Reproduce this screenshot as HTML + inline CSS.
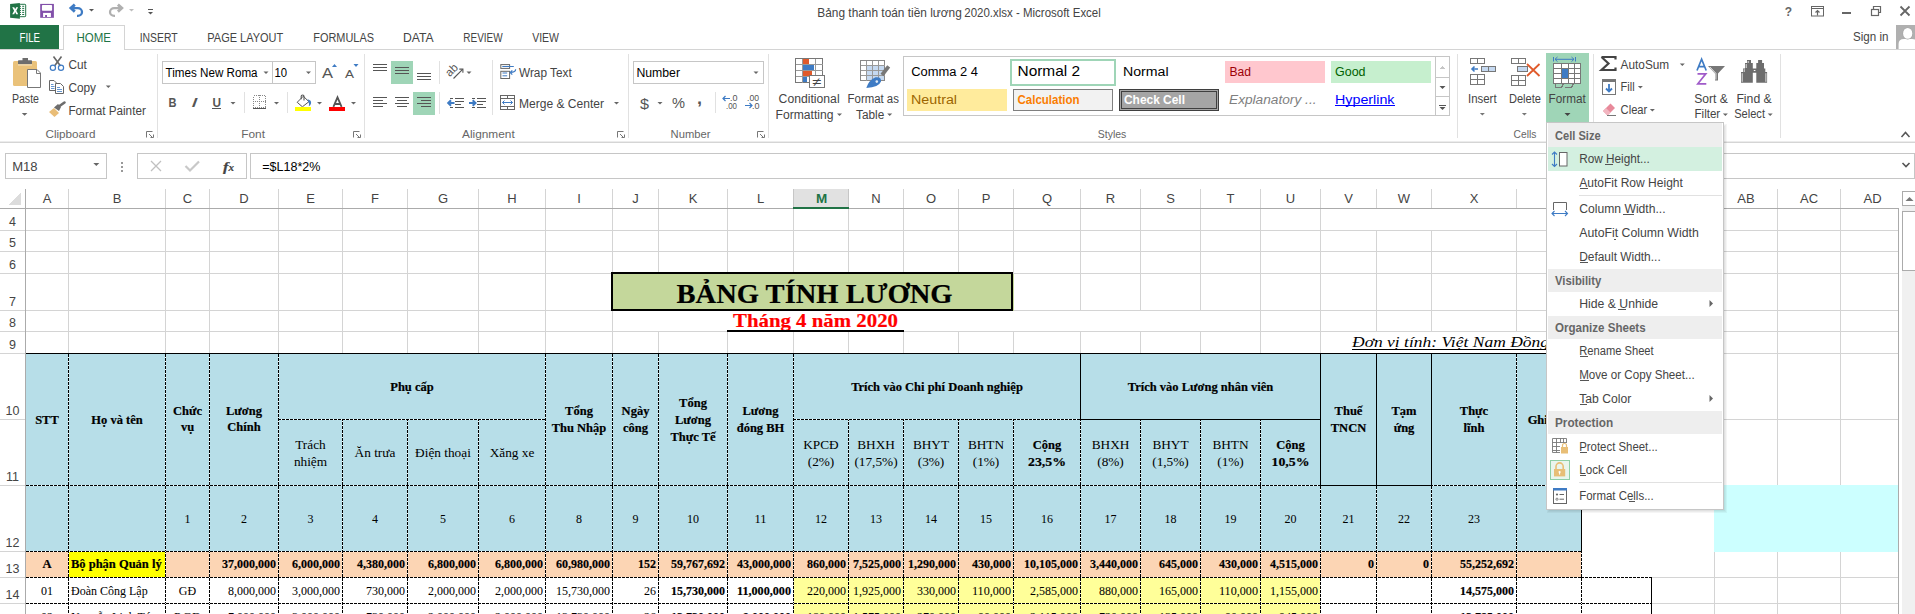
<!DOCTYPE html>
<html><head><meta charset="utf-8"><style>
html,body{margin:0;padding:0;background:#fff;}
body{width:1915px;height:614px;overflow:hidden;position:relative;}
svg{position:absolute;left:0;top:0;display:block;}
text{white-space:pre;}
</style></head><body>
<svg width="1915" height="614" viewBox="0 0 1915 614" shape-rendering="crispEdges">
<rect x="0" y="0" width="1915" height="153" fill="#ffffff" />
<g shape-rendering="geometricPrecision"><rect x="19.3" y="4.3" width="6.4" height="12.4" rx="0.8" fill="#fff" stroke="#217346" stroke-width="1"/><path d="M20 6.3 H21 M22.2 6.3 H24.2 M20 8.4 H21 M22.2 8.4 H24.2 M20 10.4 H21 M22.2 10.4 H24.2 M20 12.4 H21 M22.2 12.4 H24.2 M20 14.5 H21 M22.2 14.5 H24.2" stroke="#217346" stroke-width="1"/><path d="M10.1 4 L19.9 2.9 L19.9 18.8 L10.1 17.8 Z" fill="#217346"/><path d="M12.2 7.3 L14.2 7.3 L15.2 9.3 L16.2 7.3 L18.1 7.3 L16.3 10.7 L18.2 14.2 L16.2 14.2 L15.2 12.1 L14.2 14.2 L12.2 14.2 L14.1 10.7 Z" fill="#fff"/></g>
<g shape-rendering="geometricPrecision"><rect x="40.2" y="3.9" width="13.7" height="13.9" fill="#8250aa"/><rect x="41.9" y="4.9" width="10.2" height="5.9" rx="0.8" fill="#fff"/><rect x="43.1" y="12.9" width="7.8" height="4.1" fill="#fff"/><rect x="45.1" y="15" width="1.9" height="2" fill="#8250aa"/></g>
<g shape-rendering="geometricPrecision" fill="none"><path d="M74.8 4.6 L70.9 8.1 L74.8 11.6" stroke="#3e7bc4" stroke-width="2.8" stroke-linejoin="miter"/><path d="M71.5 8.1 H77.8 A4.2 3.9 0 0 1 77.8 15.9 H77" stroke="#3e7bc4" stroke-width="2.3"/></g>
<polygon points="89.0,9 94.0,9 91.5,11.5" fill="#555" shape-rendering="geometricPrecision"/>
<g shape-rendering="geometricPrecision" fill="none"><path d="M117.9 4.6 L121.8 8.1 L117.9 11.6" stroke="#b0b0b0" stroke-width="2.8" stroke-linejoin="miter"/><path d="M121.2 8.1 H114.2 A4.2 3.9 0 0 0 114.2 15.9 H115" stroke="#b0b0b0" stroke-width="2.3"/></g>
<polygon points="129.0,9 134.0,9 131.5,11.5" fill="#bdbdbd" shape-rendering="geometricPrecision"/>
<rect x="148" y="9" width="5" height="1" fill="#555" />
<polygon points="148.0,12 153.0,12 150.5,14.5" fill="#555" shape-rendering="geometricPrecision"/>
<text x="817.3" y="17" font-family="Liberation Sans" font-size="12" fill="#444444" font-weight="normal" font-style="normal" text-anchor="start" textLength="144.5" lengthAdjust="spacingAndGlyphs" >Bảng thanh toán tiền lương</text>
<text x="964.3" y="17" font-family="Liberation Sans" font-size="12" fill="#444444" font-weight="normal" font-style="normal" text-anchor="start" textLength="136.5" lengthAdjust="spacingAndGlyphs" >2020.xlsx - Microsoft Excel</text>
<g shape-rendering="geometricPrecision" fill="none" stroke="#666"><rect x="1811.5" y="6.5" width="12" height="9.5" stroke-width="1"/><path d="M1811.5 8.5 H1823.5" stroke-width="1"/><path d="M1817.5 15.5 V11 M1815.5 12.5 L1817.5 10.5 L1819.5 12.5" stroke-width="1.2"/><rect x="1842" y="12" width="9" height="2" fill="#666" stroke="none"/><rect x="1871.5" y="9.5" width="7" height="6" stroke-width="1.2"/><path d="M1873.5 9.5 V6.5 H1880.5 V12.5 H1878.5" stroke-width="1.2"/><path d="M1900.5 6.5 L1909.5 15.5 M1909.5 6.5 L1900.5 15.5" stroke-width="1.8"/></g>
<text x="1788.5" y="16" font-family="Liberation Sans" font-size="12" fill="#666" font-weight="bold" font-style="normal" text-anchor="middle" >?</text>
<rect x="0" y="25" width="59" height="25" fill="#217346" />
<text x="19.5" y="42" font-family="Liberation Sans" font-size="12" fill="#ffffff" font-weight="normal" font-style="normal" text-anchor="start" textLength="20.5" lengthAdjust="spacingAndGlyphs" >FILE</text>
<path d="M63.5 50 V25.5 H124.5 V50" fill="#fff" stroke="#d4d4d4" stroke-width="1"/>
<line x1="0" y1="49.5" x2="63" y2="49.5" stroke="#d4d4d4" stroke-width="1"/>
<line x1="125" y1="49.5" x2="1915" y2="49.5" stroke="#d4d4d4" stroke-width="1"/>
<text x="76.5" y="42" font-family="Liberation Sans" font-size="12" fill="#217346" font-weight="normal" font-style="normal" text-anchor="start" textLength="34.5" lengthAdjust="spacingAndGlyphs" >HOME</text>
<text x="139.7" y="42" font-family="Liberation Sans" font-size="12" fill="#444444" font-weight="normal" font-style="normal" text-anchor="start" textLength="38.0" lengthAdjust="spacingAndGlyphs" >INSERT</text>
<text x="207.3" y="42" font-family="Liberation Sans" font-size="12" fill="#444444" font-weight="normal" font-style="normal" text-anchor="start" textLength="75.9" lengthAdjust="spacingAndGlyphs" >PAGE LAYOUT</text>
<text x="313.3" y="42" font-family="Liberation Sans" font-size="12" fill="#444444" font-weight="normal" font-style="normal" text-anchor="start" textLength="60.7" lengthAdjust="spacingAndGlyphs" >FORMULAS</text>
<text x="403" y="42" font-family="Liberation Sans" font-size="12" fill="#444444" font-weight="normal" font-style="normal" text-anchor="start" textLength="30.6" lengthAdjust="spacingAndGlyphs" >DATA</text>
<text x="463.3" y="42" font-family="Liberation Sans" font-size="12" fill="#444444" font-weight="normal" font-style="normal" text-anchor="start" textLength="39.4" lengthAdjust="spacingAndGlyphs" >REVIEW</text>
<text x="532.2" y="42" font-family="Liberation Sans" font-size="12" fill="#444444" font-weight="normal" font-style="normal" text-anchor="start" textLength="26.8" lengthAdjust="spacingAndGlyphs" >VIEW</text>
<text x="1853" y="41" font-family="Liberation Sans" font-size="12" fill="#444444" font-weight="normal" font-style="normal" text-anchor="start" textLength="35.5" lengthAdjust="spacingAndGlyphs" >Sign in</text>
<rect x="1896" y="25" width="19" height="24" fill="#b0b0b0" />
<g shape-rendering="geometricPrecision"><path d="M1898.6 49 V44 Q1898.6 39 1904 39 H1912 Q1918 39 1918 45 V49 Z" fill="#fff"/><ellipse cx="1907.7" cy="33.4" rx="5.3" ry="6" fill="#a6a6a6"/><ellipse cx="1907.7" cy="33.4" rx="4.6" ry="5.4" fill="#fff"/></g>
<rect x="0" y="142" width="1915" height="1" fill="#d5d5d5" />
<rect x="0" y="141" width="1915" height="1" fill="#ececec" />
<line x1="157.5" y1="54" x2="157.5" y2="138" stroke="#e1e1e1" stroke-width="1"/>
<line x1="364.5" y1="54" x2="364.5" y2="138" stroke="#e1e1e1" stroke-width="1"/>
<line x1="628.5" y1="54" x2="628.5" y2="138" stroke="#e1e1e1" stroke-width="1"/>
<line x1="768.5" y1="54" x2="768.5" y2="138" stroke="#e1e1e1" stroke-width="1"/>
<line x1="1457.5" y1="54" x2="1457.5" y2="138" stroke="#e1e1e1" stroke-width="1"/>
<line x1="1593.5" y1="54" x2="1593.5" y2="138" stroke="#e1e1e1" stroke-width="1"/>
<line x1="1780.5" y1="54" x2="1780.5" y2="138" stroke="#e1e1e1" stroke-width="1"/>
<text x="45.5" y="138" font-family="Liberation Sans" font-size="11" fill="#666666" font-weight="normal" font-style="normal" text-anchor="start" textLength="50.0" lengthAdjust="spacingAndGlyphs" >Clipboard</text>
<text x="241.3" y="138" font-family="Liberation Sans" font-size="11" fill="#666666" font-weight="normal" font-style="normal" text-anchor="start" textLength="23.7" lengthAdjust="spacingAndGlyphs" >Font</text>
<text x="462" y="138" font-family="Liberation Sans" font-size="11" fill="#666666" font-weight="normal" font-style="normal" text-anchor="start" textLength="52.7" lengthAdjust="spacingAndGlyphs" >Alignment</text>
<text x="670.6" y="138" font-family="Liberation Sans" font-size="11" fill="#666666" font-weight="normal" font-style="normal" text-anchor="start" textLength="39.9" lengthAdjust="spacingAndGlyphs" >Number</text>
<text x="1097.8" y="138" font-family="Liberation Sans" font-size="11" fill="#666666" font-weight="normal" font-style="normal" text-anchor="start" textLength="28.5" lengthAdjust="spacingAndGlyphs" >Styles</text>
<text x="1513.6" y="138" font-family="Liberation Sans" font-size="11" fill="#666666" font-weight="normal" font-style="normal" text-anchor="start" textLength="22.8" lengthAdjust="spacingAndGlyphs" >Cells</text>
<g shape-rendering="geometricPrecision" fill="none" stroke="#777" stroke-width="1"><path d="M146.5 137.5 V131.5 H152.5"/><path d="M149 134 L153 138 M150.5 137.5 H153.5 V134.5"/></g>
<g shape-rendering="geometricPrecision" fill="none" stroke="#777" stroke-width="1"><path d="M353.5 137.5 V131.5 H359.5"/><path d="M356 134 L360 138 M357.5 137.5 H360.5 V134.5"/></g>
<g shape-rendering="geometricPrecision" fill="none" stroke="#777" stroke-width="1"><path d="M617.5 137.5 V131.5 H623.5"/><path d="M620 134 L624 138 M621.5 137.5 H624.5 V134.5"/></g>
<g shape-rendering="geometricPrecision" fill="none" stroke="#777" stroke-width="1"><path d="M757.5 137.5 V131.5 H763.5"/><path d="M760 134 L764 138 M761.5 137.5 H764.5 V134.5"/></g>
<path d="M1901.5 137 L1905.5 132.5 L1909.5 137" fill="none" stroke="#555" stroke-width="1.5" shape-rendering="geometricPrecision"/>
<g shape-rendering="geometricPrecision"><rect x="13" y="61" width="24" height="25" rx="1.5" fill="#eac27a"/><rect x="22.5" y="58" width="5.5" height="3" fill="#6d6d6d"/><rect x="18" y="60.3" width="14" height="4" rx="0.8" fill="#6d6d6d"/><rect x="18" y="64.3" width="14" height="1.2" fill="#f6e2bd"/><path d="M27.5 69.5 H37 L40.5 73 V87.5 H27.5 Z" fill="#fff" stroke="#777" stroke-width="1"/><path d="M36.5 69.5 V73.5 H40.5" fill="none" stroke="#777" stroke-width="1"/></g>
<text x="11.9" y="103" font-family="Liberation Sans" font-size="12" fill="#444444" font-weight="normal" font-style="normal" text-anchor="start" textLength="27.1" lengthAdjust="spacingAndGlyphs" >Paste</text>
<polygon points="21.8,113 27.400000000000002,113 24.6,115.8" fill="#666" shape-rendering="geometricPrecision"/>
<g shape-rendering="geometricPrecision"><path d="M53.5 56.5 L60.5 66 M61.5 56.5 L54.5 66" stroke="#666" stroke-width="1.6" fill="none"/><circle cx="52.9" cy="67.8" r="2.6" fill="none" stroke="#3e7bc4" stroke-width="1.2"/><circle cx="61" cy="67.8" r="2.6" fill="none" stroke="#3e7bc4" stroke-width="1.2"/></g>
<text x="68.4" y="69" font-family="Liberation Sans" font-size="12" fill="#444444" font-weight="normal" font-style="normal" text-anchor="start" textLength="18.4" lengthAdjust="spacingAndGlyphs" >Cut</text>
<g shape-rendering="geometricPrecision"><path d="M49.5 80.5 H54 L56.5 83 V90.5 H49.5 Z" fill="#fff" stroke="#666" stroke-width="1"/><path d="M51 84.5 H53.5 M51 86.5 H54.5 M51 88.5 H54.5" stroke="#3e7bc4" stroke-width="0.8"/><path d="M55.5 83.5 H60.5 L63.5 86.5 V93.5 H55.5 Z" fill="#fff" stroke="#666" stroke-width="1"/><path d="M57 87.5 H60 M57 89.5 H62 M57 91.5 H62" stroke="#3e7bc4" stroke-width="0.8"/></g>
<text x="68.4" y="92" font-family="Liberation Sans" font-size="12" fill="#444444" font-weight="normal" font-style="normal" text-anchor="start" textLength="27.6" lengthAdjust="spacingAndGlyphs" >Copy</text>
<polygon points="105.8,85.5 110.8,85.5 108.3,88.0" fill="#666" shape-rendering="geometricPrecision"/>
<g shape-rendering="geometricPrecision"><path d="M49 112 L54 108 L59 113 L54.5 117 Z" fill="#e9bd77"/><path d="M54 107.5 L58 104 L61 107 L59 111 Z" fill="#6d6d6d"/><path d="M59.5 106 L64.5 102.5" stroke="#6d6d6d" stroke-width="2.6" stroke-linecap="round"/></g>
<text x="68.4" y="115" font-family="Liberation Sans" font-size="12" fill="#444444" font-weight="normal" font-style="normal" text-anchor="start" textLength="77.4" lengthAdjust="spacingAndGlyphs" >Format Painter</text>
<rect x="162.5" y="61.5" width="110" height="22" fill="#fff" stroke="#c6c6c6"/>
<rect x="272.5" y="61.5" width="43" height="22" fill="#fff" stroke="#c6c6c6"/>
<text x="165.6" y="77" font-family="Liberation Sans" font-size="12" fill="#000" font-weight="normal" font-style="normal" text-anchor="start" textLength="92" lengthAdjust="spacingAndGlyphs" >Times New Roma</text>
<polygon points="263.5,71.5 268.5,71.5 266,74.0" fill="#666" shape-rendering="geometricPrecision"/>
<text x="274.5" y="77" font-family="Liberation Sans" font-size="12" fill="#000" font-weight="normal" font-style="normal" text-anchor="start" textLength="12.6" lengthAdjust="spacingAndGlyphs" >10</text>
<polygon points="306.0,71.5 311.0,71.5 308.5,74.0" fill="#666" shape-rendering="geometricPrecision"/>
<text x="322" y="78" font-family="Liberation Sans" font-size="14" fill="#555" font-weight="normal" font-style="normal" text-anchor="start" textLength="11" lengthAdjust="spacingAndGlyphs" >A</text>
<polygon points="332,67 334.5,64 337,67" fill="#3e7bc4" shape-rendering="geometricPrecision"/>
<text x="345" y="78" font-family="Liberation Sans" font-size="11" fill="#555" font-weight="normal" font-style="normal" text-anchor="start" textLength="9" lengthAdjust="spacingAndGlyphs" >A</text>
<polygon points="353.5,64 356,67 358.5,64" fill="#3e7bc4" shape-rendering="geometricPrecision"/>
<text x="168.5" y="106.5" font-family="Liberation Sans" font-size="12.5" fill="#555" font-weight="bold" font-style="normal" text-anchor="start" textLength="8" lengthAdjust="spacingAndGlyphs" >B</text>
<text x="191" y="106.5" font-family="Liberation Sans" font-size="12.5" fill="#555" font-weight="normal" font-style="italic" text-anchor="start" textLength="7" lengthAdjust="spacingAndGlyphs" >I</text>
<text x="212.5" y="106.5" font-family="Liberation Sans" font-size="12.5" fill="#555" font-weight="bold" font-style="normal" text-anchor="start" textLength="8.5" lengthAdjust="spacingAndGlyphs" >U</text>
<rect x="212" y="108" width="9" height="1" fill="#555" />
<polygon points="230.5,102 235.5,102 233,104.5" fill="#666" shape-rendering="geometricPrecision"/>
<line x1="244.5" y1="92" x2="244.5" y2="113" stroke="#e1e1e1" stroke-width="1"/>
<g shape-rendering="crispEdges" fill="none" stroke="#888" stroke-dasharray="1 1"><rect x="253.5" y="95.5" width="12" height="12"/><path d="M259.5 95 V108 M253 101.5 H266"/></g>
<rect x="253" y="108" width="13" height="1" fill="#555" />
<polygon points="274.0,102 279.0,102 276.5,104.5" fill="#666" shape-rendering="geometricPrecision"/>
<line x1="287.5" y1="92" x2="287.5" y2="113" stroke="#e1e1e1" stroke-width="1"/>
<g shape-rendering="geometricPrecision"><path d="M297.2 102.3 L303.3 96.2 L308.9 101.7 L302.4 106.8 Z" fill="#fff" stroke="#555" stroke-width="1"/><path d="M301.2 99.2 V96.3 Q301.2 95 302.6 95 Q304 95 304 96.3 V100.6" stroke="#555" stroke-width="1.1" fill="none"/><path d="M307.6 99.2 Q311.8 100.2 311 103.5 Q310.5 105.5 308.8 106.3 Q309.6 103.5 308.3 101.8 Z" fill="#3e7bc4"/></g>
<rect x="295" y="107" width="16" height="4" fill="#ffff00" />
<polygon points="317.0,102 322.0,102 319.5,104.5" fill="#666" shape-rendering="geometricPrecision"/>
<g shape-rendering="geometricPrecision"><path d="M333.4 106.8 L337.5 97.3 L341.6 106.8 M334.8 104 H340.2" stroke="#555" stroke-width="1.8" fill="none"/></g>
<rect x="329" y="107" width="16" height="4" fill="#ff0000" />
<polygon points="351.0,102 356.0,102 353.5,104.5" fill="#666" shape-rendering="geometricPrecision"/>
<rect x="391" y="61" width="22" height="23" fill="#9fd5b7" />
<rect x="373" y="64" width="14" height="1" fill="#555" />
<rect x="373" y="67" width="14" height="1" fill="#555" />
<rect x="373" y="70" width="14" height="1" fill="#555" />
<rect x="395" y="67" width="14" height="1" fill="#555" />
<rect x="395" y="70" width="14" height="1" fill="#555" />
<rect x="395" y="73" width="14" height="1" fill="#555" />
<rect x="417" y="73" width="14" height="1" fill="#555" />
<rect x="417" y="76" width="14" height="1" fill="#555" />
<rect x="417" y="79" width="14" height="1" fill="#555" />
<line x1="439.5" y1="61" x2="439.5" y2="84" stroke="#e1e1e1" stroke-width="1"/>
<g shape-rendering="geometricPrecision"><text x="445.5" y="74" font-family="Liberation Sans" font-size="11.5" fill="#555" transform="rotate(-45 451.5 70.5)">ab</text><path d="M453.5 78.5 L462.6 69.4" stroke="#555" stroke-width="1.1" fill="none"/><path d="M459.3 69.1 H462.9 V72.7" stroke="#555" stroke-width="1.1" fill="none"/></g>
<polygon points="466.5,71.5 471.5,71.5 469,74.0" fill="#666" shape-rendering="geometricPrecision"/>
<rect x="413" y="92" width="22" height="23" fill="#9fd5b7" />
<rect x="373" y="97" width="14" height="1" fill="#555" />
<rect x="395.0" y="97" width="14" height="1" fill="#555" />
<rect x="417" y="97" width="14" height="1" fill="#555" />
<rect x="373" y="100" width="10" height="1" fill="#555" />
<rect x="397.0" y="100" width="10" height="1" fill="#555" />
<rect x="421" y="100" width="10" height="1" fill="#555" />
<rect x="373" y="103" width="14" height="1" fill="#555" />
<rect x="395.0" y="103" width="14" height="1" fill="#555" />
<rect x="417" y="103" width="14" height="1" fill="#555" />
<rect x="373" y="106" width="10" height="1" fill="#555" />
<rect x="397.0" y="106" width="10" height="1" fill="#555" />
<rect x="421" y="106" width="10" height="1" fill="#555" />
<line x1="439.5" y1="92" x2="439.5" y2="114" stroke="#e1e1e1" stroke-width="1"/>
<rect x="449.5" y="98" width="3" height="1" fill="#555" />
<rect x="454.5" y="98" width="9" height="1" fill="#555" />
<rect x="454.5" y="101" width="9" height="1" fill="#555" />
<rect x="454.5" y="104" width="6" height="1" fill="#555" />
<rect x="449.5" y="107" width="3" height="1" fill="#555" />
<rect x="454.5" y="107" width="9" height="1" fill="#555" />
<rect x="471.5" y="98" width="3" height="1" fill="#555" />
<rect x="476.5" y="98" width="9" height="1" fill="#555" />
<rect x="476.5" y="101" width="9" height="1" fill="#555" />
<rect x="476.5" y="104" width="6" height="1" fill="#555" />
<rect x="471.5" y="107" width="3" height="1" fill="#555" />
<rect x="476.5" y="107" width="9" height="1" fill="#555" />
<g shape-rendering="geometricPrecision"><path d="M448.2 103 H454.5 M451 100.2 L448.2 103 L451 105.8" stroke="#3e7bc4" stroke-width="2" fill="none"/><path d="M469 103 H475.5 M472.7 100.2 L475.5 103 L472.7 105.8" stroke="#3e7bc4" stroke-width="2" fill="none"/></g>
<line x1="492.5" y1="60" x2="492.5" y2="115" stroke="#e1e1e1" stroke-width="1"/>
<g shape-rendering="geometricPrecision"><rect x="500.8" y="64.6" width="8.8" height="3.8" fill="#fff" stroke="#666" stroke-width="1"/><path d="M502.3 66.5 H513.8" stroke="#3e7bc4" stroke-width="1"/><rect x="500.8" y="71.3" width="8.8" height="7.2" fill="#fff" stroke="#666" stroke-width="1"/><path d="M502.5 73 H507.2 M502.5 75.8 H507.2" stroke="#3e7bc4" stroke-width="1"/><path d="M515.6 69.3 Q515.8 72.3 510.5 72.5 M512.3 70.4 L510.2 72.5 L512.3 74.6" stroke="#3e7bc4" stroke-width="1.2" fill="none"/></g>
<text x="519" y="77" font-family="Liberation Sans" font-size="12" fill="#444444" font-weight="normal" font-style="normal" text-anchor="start" textLength="52.7" lengthAdjust="spacingAndGlyphs" >Wrap Text</text>
<g shape-rendering="geometricPrecision"><rect x="500.5" y="95.5" width="14" height="14" fill="#fff" stroke="#666" stroke-width="1"/><path d="M500.5 98.5 H514.5 M500.5 106.5 H514.5 M507.5 95.5 V98.5 M507.5 106.5 V109.5" stroke="#666" stroke-width="1" fill="none"/><path d="M502.5 102.5 H512.5 M504.5 100.5 L502.5 102.5 L504.5 104.5 M510.5 100.5 L512.5 102.5 L510.5 104.5" stroke="#3e7bc4" stroke-width="1" fill="none"/></g>
<text x="519" y="108" font-family="Liberation Sans" font-size="12" fill="#444444" font-weight="normal" font-style="normal" text-anchor="start" textLength="85" lengthAdjust="spacingAndGlyphs" >Merge &amp; Center</text>
<polygon points="614.0,102 619.0,102 616.5,104.5" fill="#666" shape-rendering="geometricPrecision"/>
<rect x="633.5" y="61.5" width="130" height="22" fill="#fff" stroke="#c6c6c6"/>
<text x="636.4" y="77" font-family="Liberation Sans" font-size="12" fill="#000" font-weight="normal" font-style="normal" text-anchor="start" textLength="43.6" lengthAdjust="spacingAndGlyphs" >Number</text>
<polygon points="753.5,71.5 758.5,71.5 756,74.0" fill="#666" shape-rendering="geometricPrecision"/>
<text x="640" y="109" font-family="Liberation Sans" font-size="15" fill="#555" font-weight="normal" font-style="normal" text-anchor="start" textLength="9" lengthAdjust="spacingAndGlyphs" >$</text>
<polygon points="657.5,102 662.5,102 660,104.5" fill="#666" shape-rendering="geometricPrecision"/>
<text x="672" y="108" font-family="Liberation Sans" font-size="14" fill="#555" font-weight="normal" font-style="normal" text-anchor="start" textLength="13" lengthAdjust="spacingAndGlyphs" >%</text>
<text x="697" y="104" font-family="Liberation Sans" font-size="16" fill="#555" font-weight="bold" font-style="normal" text-anchor="start" textLength="5" lengthAdjust="spacingAndGlyphs" >,</text>
<line x1="715.5" y1="92" x2="715.5" y2="113" stroke="#e1e1e1" stroke-width="1"/>
<g shape-rendering="geometricPrecision"><path d="M723 98.5 H730 M725.5 96 L723 98.5 L725.5 101" stroke="#3e7bc4" stroke-width="1.2" fill="none"/><path d="M745 105.5 H752 M749.5 103 L752 105.5 L749.5 108" stroke="#3e7bc4" stroke-width="1.2" fill="none"/></g>
<text x="730" y="101" font-family="Liberation Sans" font-size="8.5" fill="#555" font-weight="normal" font-style="normal" text-anchor="start" textLength="7.5" lengthAdjust="spacingAndGlyphs" >.0</text>
<text x="726" y="109" font-family="Liberation Sans" font-size="8.5" fill="#555" font-weight="normal" font-style="normal" text-anchor="start" textLength="11" lengthAdjust="spacingAndGlyphs" >.00</text>
<text x="747" y="101" font-family="Liberation Sans" font-size="8.5" fill="#555" font-weight="normal" font-style="normal" text-anchor="start" textLength="12" lengthAdjust="spacingAndGlyphs" >.00</text>
<text x="752" y="109" font-family="Liberation Sans" font-size="8.5" fill="#555" font-weight="normal" font-style="normal" text-anchor="start" textLength="7.5" lengthAdjust="spacingAndGlyphs" >.0</text>
<g shape-rendering="crispEdges"><rect x="795.5" y="58.5" width="27" height="24" fill="#fff" stroke="#777"/><path d="M795.5 64.5 H822.5" stroke="#999"/><path d="M795.5 70.5 H822.5" stroke="#999"/><path d="M795.5 76.5 H822.5" stroke="#999"/><path d="M802.5 58.5 V82.5" stroke="#999"/><path d="M815.5 58.5 V82.5" stroke="#999"/><rect x="803" y="59" width="6" height="5" fill="#e05a2b"/><rect x="803" y="65" width="11" height="5" fill="#3e7bc4"/><rect x="803" y="71" width="9" height="5" fill="#e05a2b"/><rect x="803" y="77" width="4" height="5" fill="#3e7bc4"/><rect x="809.5" y="75.5" width="15" height="12" fill="#fff" stroke="#777"/></g>
<text x="812.5" y="86" font-family="Liberation Sans" font-size="12" fill="#444" font-weight="normal" font-style="normal" text-anchor="start" textLength="9" lengthAdjust="spacingAndGlyphs" >≠</text>
<text x="778.6" y="102.5" font-family="Liberation Sans" font-size="12" fill="#444444" font-weight="normal" font-style="normal" text-anchor="start" textLength="61" lengthAdjust="spacingAndGlyphs" >Conditional</text>
<text x="775.5" y="118.8" font-family="Liberation Sans" font-size="12" fill="#444444" font-weight="normal" font-style="normal" text-anchor="start" textLength="58" lengthAdjust="spacingAndGlyphs" >Formatting</text>
<polygon points="837.0,113.5 842.0,113.5 839.5,116.0" fill="#666" shape-rendering="geometricPrecision"/>
<g shape-rendering="crispEdges"><rect x="866" y="66" width="19" height="15" fill="#c5d9f1"/><rect x="860.5" y="60.5" width="24" height="20" fill="none" stroke="#888"/><path d="M860.5 65.5 H884.5" stroke="#999"/><path d="M860.5 70.5 H884.5" stroke="#999"/><path d="M860.5 75.5 H884.5" stroke="#999"/><path d="M866.5 60.5 V80.5" stroke="#999"/><path d="M872.5 60.5 V80.5" stroke="#999"/><path d="M878.5 60.5 V80.5" stroke="#999"/></g>
<g shape-rendering="geometricPrecision"><path d="M888.7 66.3 L882 75" stroke="#777" stroke-width="3.8" stroke-linecap="butt"/><path d="M866.3 88 Q868.5 80.5 875.5 77.3 Q881.5 76.5 881 81.5 Q879 87 866.3 88 Z" fill="#3e7bc4"/><circle cx="876.8" cy="81.6" r="1.3" fill="#fff" opacity="0.85"/></g>
<text x="847.6" y="102.5" font-family="Liberation Sans" font-size="12" fill="#444444" font-weight="normal" font-style="normal" text-anchor="start" textLength="51.3" lengthAdjust="spacingAndGlyphs" >Format as</text>
<text x="856" y="118.8" font-family="Liberation Sans" font-size="12" fill="#444444" font-weight="normal" font-style="normal" text-anchor="start" textLength="28.2" lengthAdjust="spacingAndGlyphs" >Table</text>
<polygon points="887.2,113.5 892.2,113.5 889.7,116.0" fill="#666" shape-rendering="geometricPrecision"/>
<rect x="903.5" y="56.5" width="546" height="59" fill="#fff" stroke="#c6c6c6"/>
<text x="911.3" y="76" font-family="Liberation Sans" font-size="12" fill="#000" font-weight="normal" font-style="normal" text-anchor="start" textLength="66.7" lengthAdjust="spacingAndGlyphs" >Comma 2 4</text>
<rect x="1011" y="59.5" width="104" height="25" fill="#fff" stroke="#9fd5b7" stroke-width="2"/>
<text x="1017.5" y="75.7" font-family="Liberation Sans" font-size="14.5" fill="#000" font-weight="normal" font-style="normal" text-anchor="start" textLength="62.5" lengthAdjust="spacingAndGlyphs" >Normal 2</text>
<text x="1123" y="76" font-family="Liberation Sans" font-size="12" fill="#000" font-weight="normal" font-style="normal" text-anchor="start" textLength="45.6" lengthAdjust="spacingAndGlyphs" >Normal</text>
<rect x="1225" y="61" width="100" height="22" fill="#ffc7ce" />
<text x="1229.5" y="76" font-family="Liberation Sans" font-size="12" fill="#9c0006" font-weight="normal" font-style="normal" text-anchor="start" textLength="21.5" lengthAdjust="spacingAndGlyphs" >Bad</text>
<rect x="1331" y="61" width="100" height="22" fill="#c6efce" />
<text x="1335" y="76" font-family="Liberation Sans" font-size="12" fill="#006100" font-weight="normal" font-style="normal" text-anchor="start" textLength="30.5" lengthAdjust="spacingAndGlyphs" >Good</text>
<rect x="907" y="89" width="100" height="22" fill="#ffeb9c" />
<text x="911" y="103.5" font-family="Liberation Sans" font-size="12" fill="#9c6500" font-weight="normal" font-style="normal" text-anchor="start" textLength="46" lengthAdjust="spacingAndGlyphs" >Neutral</text>
<rect x="1013.5" y="89.5" width="99" height="21" fill="#f2f2f2" stroke="#7f7f7f"/>
<text x="1017.5" y="103.5" font-family="Liberation Sans" font-size="12" fill="#fa7d00" font-weight="bold" font-style="normal" text-anchor="start" textLength="62" lengthAdjust="spacingAndGlyphs" >Calculation</text>
<rect x="1119.5" y="89.5" width="99" height="21" fill="#a5a5a5" stroke="#3f3f3f"/>
<rect x="1121.5" y="91.5" width="95" height="17" fill="none" stroke="#3f3f3f"/>
<text x="1124" y="103.5" font-family="Liberation Sans" font-size="12" fill="#ffffff" font-weight="bold" font-style="normal" text-anchor="start" textLength="61" lengthAdjust="spacingAndGlyphs" >Check Cell</text>
<text x="1229" y="103.5" font-family="Liberation Sans" font-size="12" fill="#7f7f7f" font-weight="normal" font-style="italic" text-anchor="start" textLength="87.5" lengthAdjust="spacingAndGlyphs" >Explanatory ...</text>
<text x="1335" y="103.5" font-family="Liberation Sans" font-size="12" fill="#0000ff" font-weight="normal" font-style="normal" text-anchor="start" textLength="59.5" lengthAdjust="spacingAndGlyphs" >Hyperlink</text>
<rect x="1335" y="105" width="59.5" height="1" fill="#0000ff" />
<path d="M1435.5 56.5 V115.5 M1435.5 77.5 H1449.5 M1435.5 96.5 H1449.5" stroke="#c6c6c6" fill="none"/>
<polygon points="1439.5,69 1442.5,66 1445.5,69" fill="#c6c6c6"/>
<polygon points="1439.5,86 1445.5,86 1442.5,89" fill="#555" shape-rendering="geometricPrecision"/>
<rect x="1439" y="105" width="7" height="1" fill="#555" />
<polygon points="1439.5,107 1445.5,107 1442.5,110" fill="#555" shape-rendering="geometricPrecision"/>
<g shape-rendering="crispEdges" fill="none" stroke="#777"><rect x="1470.5" y="58.5" width="14" height="5"/><path d="M1477.5 58.5 V63.5"/><rect x="1481.5" y="66.5" width="14" height="5" fill="#c5d9f1"/><path d="M1488.5 66.5 V71.5"/><rect x="1470.5" y="74.5" width="14" height="10"/><path d="M1477.5 74.5 V84.5 M1470.5 79.5 H1484.5"/><rect x="1511.5" y="58.5" width="14" height="5"/><path d="M1518.5 58.5 V63.5"/><rect x="1517.5" y="66.5" width="10" height="5" fill="#c5d9f1"/><rect x="1511.5" y="75.5" width="14" height="10"/><path d="M1518.5 75.5 V85.5 M1511.5 80.5 H1525.5"/></g>
<g shape-rendering="geometricPrecision"><path d="M1478 69 H1472 M1474.5 66.5 L1472 69 L1474.5 71.5" stroke="#3e7bc4" stroke-width="1.6" fill="none"/><path d="M1527 64 L1539.5 76 M1539.5 64 L1527 76" stroke="#e05a2b" stroke-width="1.8" fill="none"/></g>
<text x="1468" y="103" font-family="Liberation Sans" font-size="12" fill="#444444" font-weight="normal" font-style="normal" text-anchor="start" textLength="28.6" lengthAdjust="spacingAndGlyphs" >Insert</text>
<polygon points="1479.9,113 1484.9,113 1482.4,115.5" fill="#777" shape-rendering="geometricPrecision"/>
<text x="1508.9" y="103" font-family="Liberation Sans" font-size="12" fill="#444444" font-weight="normal" font-style="normal" text-anchor="start" textLength="32" lengthAdjust="spacingAndGlyphs" >Delete</text>
<polygon points="1521.9,113 1526.9,113 1524.4,115.5" fill="#777" shape-rendering="geometricPrecision"/>
<rect x="1546" y="53" width="43" height="70" fill="#9fd5b7" />
<g shape-rendering="crispEdges" fill="none" stroke="#777"><rect x="1553.5" y="63.5" width="27" height="20" fill="#fff"/><path d="M1553.5 68.5 H1580.5"/><path d="M1553.5 73.5 H1580.5"/><path d="M1553.5 78.5 H1580.5"/><path d="M1561.5 63.5 V83.5"/><path d="M1568.5 63.5 V83.5"/><path d="M1574.5 63.5 V83.5"/><path d="M1555.5 83.5 V87.5 H1561.5 L1563.5 83.5 M1564.5 87.5 H1571.5 L1573.5 83.5"/></g>
<rect x="1562" y="69" width="6" height="9" fill="#3e7bc4" />
<g shape-rendering="geometricPrecision"><path d="M1553.5 57 V61.5 M1575.5 57 V61.5" stroke="#3e7bc4" stroke-width="1"/><path d="M1555 59.3 H1574 M1557.5 57 L1555 59.3 L1557.5 61.6 M1571.5 57 L1574 59.3 L1571.5 61.6" stroke="#3e7bc4" stroke-width="1" fill="none"/></g>
<text x="1548.6" y="103" font-family="Liberation Sans" font-size="12" fill="#444444" font-weight="normal" font-style="normal" text-anchor="start" textLength="37.2" lengthAdjust="spacingAndGlyphs" >Format</text>
<polygon points="1564.5,113 1570.5,113 1567.5,116" fill="#444" shape-rendering="geometricPrecision"/>
<g shape-rendering="geometricPrecision"><path d="M1601.5 57 H1615.5 V59.5 M1601.5 57 L1608.5 63.5 L1601.5 70 H1615.5 V67.5" stroke="#444" stroke-width="2.2" fill="none" stroke-linejoin="miter"/></g>
<text x="1620.6" y="69" font-family="Liberation Sans" font-size="12" fill="#444444" font-weight="normal" font-style="normal" text-anchor="start" textLength="48.6" lengthAdjust="spacingAndGlyphs" >AutoSum</text>
<polygon points="1679.8,63.5 1684.8,63.5 1682.3,66.0" fill="#666" shape-rendering="geometricPrecision"/>
<g shape-rendering="crispEdges"><rect x="1602.5" y="79.5" width="13" height="15" fill="#fff" stroke="#777"/><rect x="1603" y="80" width="12" height="2" fill="#777"/></g>
<g shape-rendering="geometricPrecision"><path d="M1609 84 V91 M1606 88.5 L1609 91.5 L1612 88.5" stroke="#3e7bc4" stroke-width="1.8" fill="none"/></g>
<text x="1620.6" y="91" font-family="Liberation Sans" font-size="12" fill="#444444" font-weight="normal" font-style="normal" text-anchor="start" textLength="14" lengthAdjust="spacingAndGlyphs" >Fill</text>
<polygon points="1637.9,86 1642.9,86 1640.4,88.5" fill="#666" shape-rendering="geometricPrecision"/>
<g shape-rendering="geometricPrecision"><path d="M1603 111 L1610.5 103.5 L1615 108 L1607.5 115.5 Z" fill="#e8899a"/><path d="M1603 111 L1606 108 L1610.5 112.5 L1607.5 115.5 Z" fill="#f2b5c0"/><path d="M1607 115.5 H1616" stroke="#777" stroke-width="1"/></g>
<text x="1620.6" y="114" font-family="Liberation Sans" font-size="12" fill="#444444" font-weight="normal" font-style="normal" text-anchor="start" textLength="26.7" lengthAdjust="spacingAndGlyphs" >Clear</text>
<polygon points="1649.9,109 1654.9,109 1652.4,111.5" fill="#666" shape-rendering="geometricPrecision"/>
<g shape-rendering="geometricPrecision"><path d="M1697 70.5 L1701.6 59.3 L1706.2 70.5 M1698.6 66.6 H1704.6" stroke="#3e7bc4" stroke-width="1.7" fill="none" stroke-linejoin="miter"/><path d="M1697.5 73.9 H1705.8 L1697.8 83.8 H1706.3" stroke="#a05bc9" stroke-width="1.7" fill="none" stroke-linejoin="miter"/><path d="M1708 66 H1725 L1718 73.4 V80.6 H1715 V73.4 Z" fill="#777"/><path d="M1709.8 67 L1715.9 73.4 V79.6" stroke="#fff" stroke-width="0.9" fill="none"/></g>
<text x="1694.2" y="102.5" font-family="Liberation Sans" font-size="12" fill="#444444" font-weight="normal" font-style="normal" text-anchor="start" textLength="33.7" lengthAdjust="spacingAndGlyphs" >Sort &amp;</text>
<text x="1694.5" y="118" font-family="Liberation Sans" font-size="12" fill="#444444" font-weight="normal" font-style="normal" text-anchor="start" textLength="25.7" lengthAdjust="spacingAndGlyphs" >Filter</text>
<polygon points="1722.9,113.5 1727.9,113.5 1725.4,116.0" fill="#666" shape-rendering="geometricPrecision"/>
<g shape-rendering="geometricPrecision"><path d="M1747 60 H1751 V63 H1752.8 V68.4 H1756.3 V63 H1758.1 V60 H1762.1 V63 H1764 V68.4 H1765.3 V72.1 H1767.1 V82.8 H1756.3 V72.7 H1752.8 V82.8 H1741 V72.1 H1743 V68.4 H1745 V63 H1747 Z" fill="#6d6d6d"/><path d="M1742.2 73.2 V81.8 M1744.2 69.2 V72 M1746.2 64 V68 M1748.2 61 V63 M1765.9 73.2 V81.8" stroke="#fff" stroke-width="0.8" fill="none"/><rect x="1753.8" y="70" width="1.6" height="1" fill="#fff"/></g>
<text x="1736.4" y="102.5" font-family="Liberation Sans" font-size="12" fill="#444444" font-weight="normal" font-style="normal" text-anchor="start" textLength="35.4" lengthAdjust="spacingAndGlyphs" >Find &amp;</text>
<text x="1734.2" y="118" font-family="Liberation Sans" font-size="12" fill="#444444" font-weight="normal" font-style="normal" text-anchor="start" textLength="30.8" lengthAdjust="spacingAndGlyphs" >Select</text>
<polygon points="1767.7,113.5 1772.7,113.5 1770.2,116.0" fill="#666" shape-rendering="geometricPrecision"/>
<rect x="5.5" y="153.5" width="101" height="25" fill="#fff" stroke="#c6c6c6"/>
<text x="12.2" y="171" font-family="Liberation Sans" font-size="12.5" fill="#444" font-weight="normal" font-style="normal" text-anchor="start" textLength="25.4" lengthAdjust="spacingAndGlyphs" >M18</text>
<polygon points="93.3,163 99.3,163 96.3,166" fill="#666" shape-rendering="geometricPrecision"/>
<rect x="121" y="162" width="2" height="2" fill="#999" />
<rect x="121" y="166" width="2" height="2" fill="#999" />
<rect x="121" y="170" width="2" height="2" fill="#999" />
<rect x="137.5" y="153.5" width="109" height="25" fill="#fff" stroke="#c6c6c6"/>
<g shape-rendering="geometricPrecision"><path d="M151 161 L161 171 M161 161 L151 171" stroke="#c0c0c0" stroke-width="1.3"/><path d="M185.5 166 L190 170.5 L199 161.5" stroke="#c8c8c8" stroke-width="2.2" fill="none"/></g>
<text x="223" y="171" font-family="Liberation Serif" font-size="13" fill="#444" font-weight="bold" font-style="italic" text-anchor="start" textLength="5.5" lengthAdjust="spacingAndGlyphs" stroke="#444" stroke-width="0.2" >f</text>
<text x="228.5" y="171" font-family="Liberation Serif" font-size="10" fill="#444" font-weight="bold" font-style="italic" text-anchor="start" textLength="5.5" lengthAdjust="spacingAndGlyphs" stroke="#444" stroke-width="0.2" >x</text>
<rect x="250.5" y="153.5" width="1664" height="25" fill="#fff" stroke="#c6c6c6"/>
<text x="262.3" y="171" font-family="Liberation Sans" font-size="12.5" fill="#000" font-weight="normal" font-style="normal" text-anchor="start" textLength="58.2" lengthAdjust="spacingAndGlyphs" >=$L18*2%</text>
<g shape-rendering="geometricPrecision"><path d="M1902.5 163 L1906 166.5 L1909.5 163" stroke="#555" stroke-width="1.6" fill="none"/></g>
<rect x="0" y="188" width="1915" height="426" fill="#ffffff" />
<line x1="68.5" y1="189" x2="68.5" y2="208" stroke="#d4d4d4" stroke-width="1"/>
<line x1="165.5" y1="189" x2="165.5" y2="208" stroke="#d4d4d4" stroke-width="1"/>
<line x1="209.5" y1="189" x2="209.5" y2="208" stroke="#d4d4d4" stroke-width="1"/>
<line x1="278.5" y1="189" x2="278.5" y2="208" stroke="#d4d4d4" stroke-width="1"/>
<line x1="342.5" y1="189" x2="342.5" y2="208" stroke="#d4d4d4" stroke-width="1"/>
<line x1="407.5" y1="189" x2="407.5" y2="208" stroke="#d4d4d4" stroke-width="1"/>
<line x1="478.5" y1="189" x2="478.5" y2="208" stroke="#d4d4d4" stroke-width="1"/>
<line x1="545.5" y1="189" x2="545.5" y2="208" stroke="#d4d4d4" stroke-width="1"/>
<line x1="612.5" y1="189" x2="612.5" y2="208" stroke="#d4d4d4" stroke-width="1"/>
<line x1="658.5" y1="189" x2="658.5" y2="208" stroke="#d4d4d4" stroke-width="1"/>
<line x1="727.5" y1="189" x2="727.5" y2="208" stroke="#d4d4d4" stroke-width="1"/>
<line x1="793.5" y1="189" x2="793.5" y2="208" stroke="#d4d4d4" stroke-width="1"/>
<line x1="848.5" y1="189" x2="848.5" y2="208" stroke="#d4d4d4" stroke-width="1"/>
<line x1="903.5" y1="189" x2="903.5" y2="208" stroke="#d4d4d4" stroke-width="1"/>
<line x1="958.5" y1="189" x2="958.5" y2="208" stroke="#d4d4d4" stroke-width="1"/>
<line x1="1013.5" y1="189" x2="1013.5" y2="208" stroke="#d4d4d4" stroke-width="1"/>
<line x1="1080.5" y1="189" x2="1080.5" y2="208" stroke="#d4d4d4" stroke-width="1"/>
<line x1="1140.5" y1="189" x2="1140.5" y2="208" stroke="#d4d4d4" stroke-width="1"/>
<line x1="1200.5" y1="189" x2="1200.5" y2="208" stroke="#d4d4d4" stroke-width="1"/>
<line x1="1260.5" y1="189" x2="1260.5" y2="208" stroke="#d4d4d4" stroke-width="1"/>
<line x1="1320.5" y1="189" x2="1320.5" y2="208" stroke="#d4d4d4" stroke-width="1"/>
<line x1="1376.5" y1="189" x2="1376.5" y2="208" stroke="#d4d4d4" stroke-width="1"/>
<line x1="1431.5" y1="189" x2="1431.5" y2="208" stroke="#d4d4d4" stroke-width="1"/>
<line x1="1516.5" y1="189" x2="1516.5" y2="208" stroke="#d4d4d4" stroke-width="1"/>
<line x1="1581.5" y1="189" x2="1581.5" y2="208" stroke="#d4d4d4" stroke-width="1"/>
<line x1="1651.5" y1="189" x2="1651.5" y2="208" stroke="#d4d4d4" stroke-width="1"/>
<line x1="1714.5" y1="189" x2="1714.5" y2="208" stroke="#d4d4d4" stroke-width="1"/>
<line x1="1777.5" y1="189" x2="1777.5" y2="208" stroke="#d4d4d4" stroke-width="1"/>
<line x1="1840.5" y1="189" x2="1840.5" y2="208" stroke="#d4d4d4" stroke-width="1"/>
<rect x="793" y="189" width="55" height="18" fill="#e1e1e1" />
<line x1="793.5" y1="189" x2="793.5" y2="208" stroke="#c6c6c6" stroke-width="1"/>
<line x1="848.5" y1="189" x2="848.5" y2="208" stroke="#c6c6c6" stroke-width="1"/>
<line x1="1898.5" y1="189" x2="1898.5" y2="208" stroke="#d4d4d4" stroke-width="1"/>
<text x="47.0" y="203" font-family="Liberation Sans" font-size="13" fill="#444444" font-weight="normal" font-style="normal" text-anchor="middle" >A</text>
<text x="117.0" y="203" font-family="Liberation Sans" font-size="13" fill="#444444" font-weight="normal" font-style="normal" text-anchor="middle" >B</text>
<text x="187.5" y="203" font-family="Liberation Sans" font-size="13" fill="#444444" font-weight="normal" font-style="normal" text-anchor="middle" >C</text>
<text x="244.0" y="203" font-family="Liberation Sans" font-size="13" fill="#444444" font-weight="normal" font-style="normal" text-anchor="middle" >D</text>
<text x="310.5" y="203" font-family="Liberation Sans" font-size="13" fill="#444444" font-weight="normal" font-style="normal" text-anchor="middle" >E</text>
<text x="375.0" y="203" font-family="Liberation Sans" font-size="13" fill="#444444" font-weight="normal" font-style="normal" text-anchor="middle" >F</text>
<text x="443.0" y="203" font-family="Liberation Sans" font-size="13" fill="#444444" font-weight="normal" font-style="normal" text-anchor="middle" >G</text>
<text x="512.0" y="203" font-family="Liberation Sans" font-size="13" fill="#444444" font-weight="normal" font-style="normal" text-anchor="middle" >H</text>
<text x="579.0" y="203" font-family="Liberation Sans" font-size="13" fill="#444444" font-weight="normal" font-style="normal" text-anchor="middle" >I</text>
<text x="635.5" y="203" font-family="Liberation Sans" font-size="13" fill="#444444" font-weight="normal" font-style="normal" text-anchor="middle" >J</text>
<text x="693.0" y="203" font-family="Liberation Sans" font-size="13" fill="#444444" font-weight="normal" font-style="normal" text-anchor="middle" >K</text>
<text x="760.5" y="203" font-family="Liberation Sans" font-size="13" fill="#444444" font-weight="normal" font-style="normal" text-anchor="middle" >L</text>
<text x="821.5" y="203" font-family="Liberation Sans" font-size="13.5" fill="#217346" font-weight="bold" font-style="normal" text-anchor="middle" >M</text>
<text x="876.0" y="203" font-family="Liberation Sans" font-size="13" fill="#444444" font-weight="normal" font-style="normal" text-anchor="middle" >N</text>
<text x="931.0" y="203" font-family="Liberation Sans" font-size="13" fill="#444444" font-weight="normal" font-style="normal" text-anchor="middle" >O</text>
<text x="986.0" y="203" font-family="Liberation Sans" font-size="13" fill="#444444" font-weight="normal" font-style="normal" text-anchor="middle" >P</text>
<text x="1047.0" y="203" font-family="Liberation Sans" font-size="13" fill="#444444" font-weight="normal" font-style="normal" text-anchor="middle" >Q</text>
<text x="1110.5" y="203" font-family="Liberation Sans" font-size="13" fill="#444444" font-weight="normal" font-style="normal" text-anchor="middle" >R</text>
<text x="1170.5" y="203" font-family="Liberation Sans" font-size="13" fill="#444444" font-weight="normal" font-style="normal" text-anchor="middle" >S</text>
<text x="1230.5" y="203" font-family="Liberation Sans" font-size="13" fill="#444444" font-weight="normal" font-style="normal" text-anchor="middle" >T</text>
<text x="1290.5" y="203" font-family="Liberation Sans" font-size="13" fill="#444444" font-weight="normal" font-style="normal" text-anchor="middle" >U</text>
<text x="1348.5" y="203" font-family="Liberation Sans" font-size="13" fill="#444444" font-weight="normal" font-style="normal" text-anchor="middle" >V</text>
<text x="1404.0" y="203" font-family="Liberation Sans" font-size="13" fill="#444444" font-weight="normal" font-style="normal" text-anchor="middle" >W</text>
<text x="1474.0" y="203" font-family="Liberation Sans" font-size="13" fill="#444444" font-weight="normal" font-style="normal" text-anchor="middle" >X</text>
<text x="1746.0" y="203" font-family="Liberation Sans" font-size="13" fill="#444444" font-weight="normal" font-style="normal" text-anchor="middle" >AB</text>
<text x="1809.0" y="203" font-family="Liberation Sans" font-size="13" fill="#444444" font-weight="normal" font-style="normal" text-anchor="middle" >AC</text>
<text x="1872.5" y="203" font-family="Liberation Sans" font-size="13" fill="#444444" font-weight="normal" font-style="normal" text-anchor="middle" >AD</text>
<polygon points="21,192 21,205 8,205" fill="#dcdcdc"/>
<line x1="0" y1="208.5" x2="1899" y2="208.5" stroke="#ababab" stroke-width="1"/>
<line x1="1898.5" y1="189" x2="1898.5" y2="208" stroke="#ffffff" stroke-width="1"/>
<rect x="793" y="207" width="56" height="2" fill="#217346" />
<line x1="25.5" y1="189" x2="25.5" y2="614" stroke="#ababab" stroke-width="1"/>
<line x1="0" y1="230.5" x2="25" y2="230.5" stroke="#d4d4d4" stroke-width="1"/>
<text x="12.5" y="226" font-family="Liberation Sans" font-size="12.5" fill="#444444" font-weight="normal" font-style="normal" text-anchor="middle" >4</text>
<line x1="0" y1="251.5" x2="25" y2="251.5" stroke="#d4d4d4" stroke-width="1"/>
<text x="12.5" y="247" font-family="Liberation Sans" font-size="12.5" fill="#444444" font-weight="normal" font-style="normal" text-anchor="middle" >5</text>
<line x1="0" y1="273.5" x2="25" y2="273.5" stroke="#d4d4d4" stroke-width="1"/>
<text x="12.5" y="269" font-family="Liberation Sans" font-size="12.5" fill="#444444" font-weight="normal" font-style="normal" text-anchor="middle" >6</text>
<line x1="0" y1="310.5" x2="25" y2="310.5" stroke="#d4d4d4" stroke-width="1"/>
<text x="12.5" y="306" font-family="Liberation Sans" font-size="12.5" fill="#444444" font-weight="normal" font-style="normal" text-anchor="middle" >7</text>
<line x1="0" y1="331.5" x2="25" y2="331.5" stroke="#d4d4d4" stroke-width="1"/>
<text x="12.5" y="327" font-family="Liberation Sans" font-size="12.5" fill="#444444" font-weight="normal" font-style="normal" text-anchor="middle" >8</text>
<line x1="0" y1="353.5" x2="25" y2="353.5" stroke="#d4d4d4" stroke-width="1"/>
<text x="12.5" y="349" font-family="Liberation Sans" font-size="12.5" fill="#444444" font-weight="normal" font-style="normal" text-anchor="middle" >9</text>
<line x1="0" y1="419.5" x2="25" y2="419.5" stroke="#d4d4d4" stroke-width="1"/>
<text x="12.5" y="415" font-family="Liberation Sans" font-size="12.5" fill="#444444" font-weight="normal" font-style="normal" text-anchor="middle" >10</text>
<line x1="0" y1="485.5" x2="25" y2="485.5" stroke="#d4d4d4" stroke-width="1"/>
<text x="12.5" y="481" font-family="Liberation Sans" font-size="12.5" fill="#444444" font-weight="normal" font-style="normal" text-anchor="middle" >11</text>
<line x1="0" y1="551.5" x2="25" y2="551.5" stroke="#d4d4d4" stroke-width="1"/>
<text x="12.5" y="547" font-family="Liberation Sans" font-size="12.5" fill="#444444" font-weight="normal" font-style="normal" text-anchor="middle" >12</text>
<line x1="0" y1="577.5" x2="25" y2="577.5" stroke="#d4d4d4" stroke-width="1"/>
<text x="12.5" y="573" font-family="Liberation Sans" font-size="12.5" fill="#444444" font-weight="normal" font-style="normal" text-anchor="middle" >13</text>
<line x1="0" y1="603.5" x2="25" y2="603.5" stroke="#d4d4d4" stroke-width="1"/>
<text x="12.5" y="599" font-family="Liberation Sans" font-size="12.5" fill="#444444" font-weight="normal" font-style="normal" text-anchor="middle" >14</text>
<line x1="26" y1="230.5" x2="1898" y2="230.5" stroke="#d4d4d4" stroke-width="1"/>
<line x1="26" y1="251.5" x2="1898" y2="251.5" stroke="#d4d4d4" stroke-width="1"/>
<line x1="26" y1="273.5" x2="1898" y2="273.5" stroke="#d4d4d4" stroke-width="1"/>
<line x1="26" y1="310.5" x2="1898" y2="310.5" stroke="#d4d4d4" stroke-width="1"/>
<line x1="26" y1="331.5" x2="1898" y2="331.5" stroke="#d4d4d4" stroke-width="1"/>
<line x1="26" y1="353.5" x2="1898" y2="353.5" stroke="#d4d4d4" stroke-width="1"/>
<line x1="26" y1="419.5" x2="1898" y2="419.5" stroke="#d4d4d4" stroke-width="1"/>
<line x1="26" y1="485.5" x2="1898" y2="485.5" stroke="#d4d4d4" stroke-width="1"/>
<line x1="26" y1="551.5" x2="1898" y2="551.5" stroke="#d4d4d4" stroke-width="1"/>
<line x1="26" y1="577.5" x2="1898" y2="577.5" stroke="#d4d4d4" stroke-width="1"/>
<line x1="26" y1="603.5" x2="1898" y2="603.5" stroke="#d4d4d4" stroke-width="1"/>
<line x1="68.5" y1="209" x2="68.5" y2="614" stroke="#d4d4d4" stroke-width="1"/>
<line x1="165.5" y1="209" x2="165.5" y2="614" stroke="#d4d4d4" stroke-width="1"/>
<line x1="209.5" y1="209" x2="209.5" y2="614" stroke="#d4d4d4" stroke-width="1"/>
<line x1="278.5" y1="209" x2="278.5" y2="614" stroke="#d4d4d4" stroke-width="1"/>
<line x1="342.5" y1="209" x2="342.5" y2="614" stroke="#d4d4d4" stroke-width="1"/>
<line x1="407.5" y1="209" x2="407.5" y2="614" stroke="#d4d4d4" stroke-width="1"/>
<line x1="478.5" y1="209" x2="478.5" y2="614" stroke="#d4d4d4" stroke-width="1"/>
<line x1="545.5" y1="209" x2="545.5" y2="614" stroke="#d4d4d4" stroke-width="1"/>
<line x1="612.5" y1="209" x2="612.5" y2="614" stroke="#d4d4d4" stroke-width="1"/>
<line x1="658.5" y1="209" x2="658.5" y2="614" stroke="#d4d4d4" stroke-width="1"/>
<line x1="727.5" y1="209" x2="727.5" y2="614" stroke="#d4d4d4" stroke-width="1"/>
<line x1="793.5" y1="209" x2="793.5" y2="614" stroke="#d4d4d4" stroke-width="1"/>
<line x1="848.5" y1="209" x2="848.5" y2="614" stroke="#d4d4d4" stroke-width="1"/>
<line x1="903.5" y1="209" x2="903.5" y2="614" stroke="#d4d4d4" stroke-width="1"/>
<line x1="958.5" y1="209" x2="958.5" y2="614" stroke="#d4d4d4" stroke-width="1"/>
<line x1="1013.5" y1="209" x2="1013.5" y2="614" stroke="#d4d4d4" stroke-width="1"/>
<line x1="1080.5" y1="209" x2="1080.5" y2="614" stroke="#d4d4d4" stroke-width="1"/>
<line x1="1140.5" y1="209" x2="1140.5" y2="614" stroke="#d4d4d4" stroke-width="1"/>
<line x1="1200.5" y1="209" x2="1200.5" y2="614" stroke="#d4d4d4" stroke-width="1"/>
<line x1="1260.5" y1="209" x2="1260.5" y2="614" stroke="#d4d4d4" stroke-width="1"/>
<line x1="1320.5" y1="209" x2="1320.5" y2="614" stroke="#d4d4d4" stroke-width="1"/>
<line x1="1376.5" y1="209" x2="1376.5" y2="614" stroke="#d4d4d4" stroke-width="1"/>
<line x1="1431.5" y1="209" x2="1431.5" y2="614" stroke="#d4d4d4" stroke-width="1"/>
<line x1="1516.5" y1="209" x2="1516.5" y2="614" stroke="#d4d4d4" stroke-width="1"/>
<line x1="1581.5" y1="209" x2="1581.5" y2="614" stroke="#d4d4d4" stroke-width="1"/>
<line x1="1651.5" y1="209" x2="1651.5" y2="614" stroke="#d4d4d4" stroke-width="1"/>
<line x1="1714.5" y1="209" x2="1714.5" y2="614" stroke="#d4d4d4" stroke-width="1"/>
<line x1="1777.5" y1="209" x2="1777.5" y2="614" stroke="#d4d4d4" stroke-width="1"/>
<line x1="1840.5" y1="209" x2="1840.5" y2="614" stroke="#d4d4d4" stroke-width="1"/>
<line x1="1898.5" y1="209" x2="1898.5" y2="614" stroke="#ababab" stroke-width="1"/>
<rect x="1899" y="181" width="16" height="433" fill="#ffffff" />
<rect x="1902" y="206" width="13" height="408" fill="#f0f0f0" />
<rect x="1902.5" y="191.5" width="14" height="14" fill="#fff" stroke="#ababab"/>
<polygon points="1905.5,201 1909.5,197 1913.5,201" fill="#777" shape-rendering="geometricPrecision"/>
<rect x="1902.5" y="211.5" width="14" height="59" fill="#fff" stroke="#ababab"/>
<rect x="1321" y="209" width="260" height="21" fill="#fff" />
<rect x="613" y="311" width="647" height="20" fill="#fff" />
<rect x="1321" y="332" width="260" height="21" fill="#fff" />
<rect x="1582" y="354" width="132" height="223" fill="#fff" />
<rect x="613" y="274" width="401" height="37" fill="#c4d79b" />
<rect x="612" y="273" width="400" height="37" fill="none" stroke="#000" stroke-width="2"/>
<text x="814.5" y="303" font-family="Liberation Serif" font-size="28" fill="#000" font-weight="bold" font-style="normal" text-anchor="middle" textLength="276" lengthAdjust="spacingAndGlyphs" stroke="#000" stroke-width="0.2" >BẢNG TÍNH LƯƠNG</text>
<text x="815.5" y="327" font-family="Liberation Serif" font-size="19" fill="#ff0000" font-weight="bold" font-style="normal" text-anchor="middle" textLength="165" lengthAdjust="spacingAndGlyphs" stroke="#ff0000" stroke-width="0.2" >Tháng 4 năm 2020</text>
<rect x="727" y="330" width="177" height="2" fill="#000" />
<text x="1352" y="347" font-family="Liberation Serif" font-size="15.5" fill="#000" font-weight="normal" font-style="italic" text-anchor="start" textLength="197" lengthAdjust="spacingAndGlyphs" >Đơn vị tính: Việt Nam Đồng</text>
<rect x="1352" y="349" width="197" height="1" fill="#000" />
<rect x="26" y="354" width="1555" height="197" fill="#b7dee8" />
<rect x="26" y="552" width="1555" height="26" fill="#fcd5b4" />
<rect x="69" y="552" width="97" height="26" fill="#ffff00" />
<rect x="26" y="578" width="1625" height="26" fill="#ffffff" />
<rect x="794" y="578" width="527" height="26" fill="#ffff99" />
<rect x="26" y="604" width="1625" height="26" fill="#ffffff" />
<rect x="794" y="604" width="527" height="26" fill="#ffff99" />
<rect x="1714" y="485" width="184" height="67" fill="#ccffff" />
<line x1="68.5" y1="354" x2="68.5" y2="614" stroke="#ffffff" stroke-width="1"/>
<line x1="68.5" y1="354" x2="68.5" y2="614" stroke="#000000" stroke-width="1" stroke-dasharray="3 1"/>
<line x1="165.5" y1="354" x2="165.5" y2="614" stroke="#ffffff" stroke-width="1"/>
<line x1="165.5" y1="354" x2="165.5" y2="614" stroke="#000000" stroke-width="1" stroke-dasharray="3 1"/>
<line x1="209.5" y1="354" x2="209.5" y2="614" stroke="#ffffff" stroke-width="1"/>
<line x1="209.5" y1="354" x2="209.5" y2="614" stroke="#000000" stroke-width="1" stroke-dasharray="3 1"/>
<line x1="278.5" y1="354" x2="278.5" y2="614" stroke="#ffffff" stroke-width="1"/>
<line x1="278.5" y1="354" x2="278.5" y2="614" stroke="#000000" stroke-width="1" stroke-dasharray="3 1"/>
<line x1="342.5" y1="354" x2="342.5" y2="614" stroke="#ffffff" stroke-width="1"/>
<line x1="342.5" y1="354" x2="342.5" y2="614" stroke="#000000" stroke-width="1" stroke-dasharray="3 1"/>
<line x1="407.5" y1="354" x2="407.5" y2="614" stroke="#ffffff" stroke-width="1"/>
<line x1="407.5" y1="354" x2="407.5" y2="614" stroke="#000000" stroke-width="1" stroke-dasharray="3 1"/>
<line x1="478.5" y1="354" x2="478.5" y2="614" stroke="#ffffff" stroke-width="1"/>
<line x1="478.5" y1="354" x2="478.5" y2="614" stroke="#000000" stroke-width="1" stroke-dasharray="3 1"/>
<line x1="545.5" y1="354" x2="545.5" y2="614" stroke="#ffffff" stroke-width="1"/>
<line x1="545.5" y1="354" x2="545.5" y2="614" stroke="#000000" stroke-width="1" stroke-dasharray="3 1"/>
<line x1="612.5" y1="354" x2="612.5" y2="614" stroke="#ffffff" stroke-width="1"/>
<line x1="612.5" y1="354" x2="612.5" y2="614" stroke="#000000" stroke-width="1" stroke-dasharray="3 1"/>
<line x1="658.5" y1="354" x2="658.5" y2="614" stroke="#ffffff" stroke-width="1"/>
<line x1="658.5" y1="354" x2="658.5" y2="614" stroke="#000000" stroke-width="1" stroke-dasharray="3 1"/>
<line x1="727.5" y1="354" x2="727.5" y2="614" stroke="#ffffff" stroke-width="1"/>
<line x1="727.5" y1="354" x2="727.5" y2="614" stroke="#000000" stroke-width="1" stroke-dasharray="3 1"/>
<line x1="793.5" y1="354" x2="793.5" y2="614" stroke="#ffffff" stroke-width="1"/>
<line x1="793.5" y1="354" x2="793.5" y2="614" stroke="#000000" stroke-width="1" stroke-dasharray="3 1"/>
<line x1="848.5" y1="354" x2="848.5" y2="614" stroke="#ffffff" stroke-width="1"/>
<line x1="848.5" y1="354" x2="848.5" y2="614" stroke="#000000" stroke-width="1" stroke-dasharray="3 1"/>
<line x1="903.5" y1="354" x2="903.5" y2="614" stroke="#ffffff" stroke-width="1"/>
<line x1="903.5" y1="354" x2="903.5" y2="614" stroke="#000000" stroke-width="1" stroke-dasharray="3 1"/>
<line x1="958.5" y1="354" x2="958.5" y2="614" stroke="#ffffff" stroke-width="1"/>
<line x1="958.5" y1="354" x2="958.5" y2="614" stroke="#000000" stroke-width="1" stroke-dasharray="3 1"/>
<line x1="1013.5" y1="354" x2="1013.5" y2="614" stroke="#ffffff" stroke-width="1"/>
<line x1="1013.5" y1="354" x2="1013.5" y2="614" stroke="#000000" stroke-width="1" stroke-dasharray="3 1"/>
<line x1="1080.5" y1="354" x2="1080.5" y2="614" stroke="#ffffff" stroke-width="1"/>
<line x1="1080.5" y1="354" x2="1080.5" y2="614" stroke="#000000" stroke-width="1" stroke-dasharray="3 1"/>
<line x1="1140.5" y1="354" x2="1140.5" y2="614" stroke="#ffffff" stroke-width="1"/>
<line x1="1140.5" y1="354" x2="1140.5" y2="614" stroke="#000000" stroke-width="1" stroke-dasharray="3 1"/>
<line x1="1200.5" y1="354" x2="1200.5" y2="614" stroke="#ffffff" stroke-width="1"/>
<line x1="1200.5" y1="354" x2="1200.5" y2="614" stroke="#000000" stroke-width="1" stroke-dasharray="3 1"/>
<line x1="1260.5" y1="354" x2="1260.5" y2="614" stroke="#ffffff" stroke-width="1"/>
<line x1="1260.5" y1="354" x2="1260.5" y2="614" stroke="#000000" stroke-width="1" stroke-dasharray="3 1"/>
<line x1="1320.5" y1="354" x2="1320.5" y2="614" stroke="#ffffff" stroke-width="1"/>
<line x1="1320.5" y1="354" x2="1320.5" y2="614" stroke="#000000" stroke-width="1" stroke-dasharray="3 1"/>
<line x1="1376.5" y1="354" x2="1376.5" y2="614" stroke="#ffffff" stroke-width="1"/>
<line x1="1376.5" y1="354" x2="1376.5" y2="614" stroke="#000000" stroke-width="1" stroke-dasharray="3 1"/>
<line x1="1431.5" y1="354" x2="1431.5" y2="614" stroke="#ffffff" stroke-width="1"/>
<line x1="1431.5" y1="354" x2="1431.5" y2="614" stroke="#000000" stroke-width="1" stroke-dasharray="3 1"/>
<line x1="1516.5" y1="354" x2="1516.5" y2="614" stroke="#ffffff" stroke-width="1"/>
<line x1="1516.5" y1="354" x2="1516.5" y2="614" stroke="#000000" stroke-width="1" stroke-dasharray="3 1"/>
<line x1="1581.5" y1="354" x2="1581.5" y2="614" stroke="#ffffff" stroke-width="1"/>
<line x1="1581.5" y1="354" x2="1581.5" y2="614" stroke="#000000" stroke-width="1" stroke-dasharray="3 1"/>
<line x1="1651.5" y1="577" x2="1651.5" y2="614" stroke="#ffffff" stroke-width="1"/>
<line x1="1651.5" y1="577" x2="1651.5" y2="614" stroke="#000000" stroke-width="1" stroke-dasharray="3 1"/>
<line x1="278" y1="419.5" x2="545" y2="419.5" stroke="#ffffff" stroke-width="1"/>
<line x1="278" y1="419.5" x2="545" y2="419.5" stroke="#000000" stroke-width="1" stroke-dasharray="3 1"/>
<line x1="793" y1="419.5" x2="1080" y2="419.5" stroke="#ffffff" stroke-width="1"/>
<line x1="793" y1="419.5" x2="1080" y2="419.5" stroke="#000000" stroke-width="1" stroke-dasharray="3 1"/>
<line x1="26" y1="485.5" x2="1581" y2="485.5" stroke="#ffffff" stroke-width="1"/>
<line x1="26" y1="485.5" x2="1581" y2="485.5" stroke="#000000" stroke-width="1" stroke-dasharray="3 1"/>
<line x1="26" y1="551.5" x2="1581" y2="551.5" stroke="#ffffff" stroke-width="1"/>
<line x1="26" y1="551.5" x2="1581" y2="551.5" stroke="#000000" stroke-width="1" stroke-dasharray="3 1"/>
<line x1="26" y1="577.5" x2="1651" y2="577.5" stroke="#ffffff" stroke-width="1"/>
<line x1="26" y1="577.5" x2="1651" y2="577.5" stroke="#000000" stroke-width="1" stroke-dasharray="3 1"/>
<line x1="26" y1="603.5" x2="1651" y2="603.5" stroke="#ffffff" stroke-width="1"/>
<line x1="26" y1="603.5" x2="1651" y2="603.5" stroke="#000000" stroke-width="1" stroke-dasharray="3 1"/>
<rect x="342" y="354" width="1" height="65" fill="#b7dee8" />
<rect x="407" y="354" width="1" height="65" fill="#b7dee8" />
<rect x="478" y="354" width="1" height="65" fill="#b7dee8" />
<rect x="848" y="354" width="1" height="65" fill="#b7dee8" />
<rect x="903" y="354" width="1" height="65" fill="#b7dee8" />
<rect x="958" y="354" width="1" height="65" fill="#b7dee8" />
<rect x="1013" y="354" width="1" height="65" fill="#b7dee8" />
<rect x="1140" y="354" width="1" height="65" fill="#b7dee8" />
<rect x="1200" y="354" width="1" height="65" fill="#b7dee8" />
<rect x="1260" y="354" width="1" height="65" fill="#b7dee8" />
<line x1="26" y1="353.5" x2="1582" y2="353.5" stroke="#000000" stroke-width="1"/>
<line x1="1080.5" y1="353" x2="1080.5" y2="420" stroke="#000000" stroke-width="1"/>
<line x1="1080" y1="419.5" x2="1321" y2="419.5" stroke="#000000" stroke-width="1"/>
<line x1="1320.5" y1="353" x2="1320.5" y2="486" stroke="#000000" stroke-width="1"/>
<line x1="1376.5" y1="353" x2="1376.5" y2="486" stroke="#000000" stroke-width="1"/>
<line x1="1431.5" y1="353" x2="1431.5" y2="486" stroke="#000000" stroke-width="1"/>
<line x1="1320" y1="485.5" x2="1432" y2="485.5" stroke="#000000" stroke-width="1"/>
<line x1="1581.5" y1="353" x2="1581.5" y2="552" stroke="#000000" stroke-width="1"/>
<line x1="1651.5" y1="577" x2="1651.5" y2="614" stroke="#000000" stroke-width="1"/>
<line x1="1581" y1="577.5" x2="1652" y2="577.5" stroke="#ffffff" stroke-width="1"/>
<line x1="1581" y1="577.5" x2="1652" y2="577.5" stroke="#000000" stroke-width="1" stroke-dasharray="3 1"/>
<text x="47.0" y="424" font-family="Liberation Serif" font-size="12.5" fill="#000" font-weight="bold" font-style="normal" text-anchor="middle" stroke="#000" stroke-width="0.2" >STT</text>
<text x="117.0" y="424" font-family="Liberation Serif" font-size="12.5" fill="#000" font-weight="bold" font-style="normal" text-anchor="middle" stroke="#000" stroke-width="0.2" >Họ và tên</text>
<text x="187.5" y="415" font-family="Liberation Serif" font-size="12.5" fill="#000" font-weight="bold" font-style="normal" text-anchor="middle" stroke="#000" stroke-width="0.2" >Chức</text>
<text x="187.5" y="431" font-family="Liberation Serif" font-size="12.5" fill="#000" font-weight="bold" font-style="normal" text-anchor="middle" stroke="#000" stroke-width="0.2" >vụ</text>
<text x="244.0" y="415" font-family="Liberation Serif" font-size="12.5" fill="#000" font-weight="bold" font-style="normal" text-anchor="middle" stroke="#000" stroke-width="0.2" >Lương</text>
<text x="244.0" y="431" font-family="Liberation Serif" font-size="12.5" fill="#000" font-weight="bold" font-style="normal" text-anchor="middle" stroke="#000" stroke-width="0.2" >Chính</text>
<text x="412.0" y="391" font-family="Liberation Serif" font-size="12.5" fill="#000" font-weight="bold" font-style="normal" text-anchor="middle" stroke="#000" stroke-width="0.2" >Phụ cấp</text>
<text x="310.5" y="449" font-family="Liberation Serif" font-size="13.3" fill="#000" font-weight="normal" font-style="normal" text-anchor="middle" >Trách</text>
<text x="310.5" y="466" font-family="Liberation Serif" font-size="13.3" fill="#000" font-weight="normal" font-style="normal" text-anchor="middle" >nhiệm</text>
<text x="375.0" y="457" font-family="Liberation Serif" font-size="13.3" fill="#000" font-weight="normal" font-style="normal" text-anchor="middle" >Ăn trưa</text>
<text x="443.0" y="457" font-family="Liberation Serif" font-size="13.3" fill="#000" font-weight="normal" font-style="normal" text-anchor="middle" >Điện thoại</text>
<text x="512.0" y="457" font-family="Liberation Serif" font-size="13.3" fill="#000" font-weight="normal" font-style="normal" text-anchor="middle" >Xăng xe</text>
<text x="579.0" y="415" font-family="Liberation Serif" font-size="12.5" fill="#000" font-weight="bold" font-style="normal" text-anchor="middle" stroke="#000" stroke-width="0.2" >Tổng</text>
<text x="579.0" y="432" font-family="Liberation Serif" font-size="12.5" fill="#000" font-weight="bold" font-style="normal" text-anchor="middle" stroke="#000" stroke-width="0.2" >Thu Nhập</text>
<text x="635.5" y="415" font-family="Liberation Serif" font-size="12.5" fill="#000" font-weight="bold" font-style="normal" text-anchor="middle" stroke="#000" stroke-width="0.2" >Ngày</text>
<text x="635.5" y="432" font-family="Liberation Serif" font-size="12.5" fill="#000" font-weight="bold" font-style="normal" text-anchor="middle" stroke="#000" stroke-width="0.2" >công</text>
<text x="693.0" y="407" font-family="Liberation Serif" font-size="12.5" fill="#000" font-weight="bold" font-style="normal" text-anchor="middle" stroke="#000" stroke-width="0.2" >Tổng</text>
<text x="693.0" y="424" font-family="Liberation Serif" font-size="12.5" fill="#000" font-weight="bold" font-style="normal" text-anchor="middle" stroke="#000" stroke-width="0.2" >Lương</text>
<text x="693.0" y="441" font-family="Liberation Serif" font-size="12.5" fill="#000" font-weight="bold" font-style="normal" text-anchor="middle" stroke="#000" stroke-width="0.2" >Thực Tế</text>
<text x="760.5" y="415" font-family="Liberation Serif" font-size="12.5" fill="#000" font-weight="bold" font-style="normal" text-anchor="middle" stroke="#000" stroke-width="0.2" >Lương</text>
<text x="760.5" y="432" font-family="Liberation Serif" font-size="12.5" fill="#000" font-weight="bold" font-style="normal" text-anchor="middle" stroke="#000" stroke-width="0.2" >đóng BH</text>
<text x="937.0" y="391" font-family="Liberation Serif" font-size="12.5" fill="#000" font-weight="bold" font-style="normal" text-anchor="middle" stroke="#000" stroke-width="0.2" >Trích vào Chi phí Doanh nghiệp</text>
<text x="821.0" y="449" font-family="Liberation Serif" font-size="13.3" fill="#000" font-weight="normal" font-style="normal" text-anchor="middle" >KPCĐ</text>
<text x="821.0" y="466" font-family="Liberation Serif" font-size="13.3" fill="#000" font-weight="normal" font-style="normal" text-anchor="middle" >(2%)</text>
<text x="876.0" y="449" font-family="Liberation Serif" font-size="13.3" fill="#000" font-weight="normal" font-style="normal" text-anchor="middle" >BHXH</text>
<text x="876.0" y="466" font-family="Liberation Serif" font-size="13.3" fill="#000" font-weight="normal" font-style="normal" text-anchor="middle" >(17,5%)</text>
<text x="931.0" y="449" font-family="Liberation Serif" font-size="13.3" fill="#000" font-weight="normal" font-style="normal" text-anchor="middle" >BHYT</text>
<text x="931.0" y="466" font-family="Liberation Serif" font-size="13.3" fill="#000" font-weight="normal" font-style="normal" text-anchor="middle" >(3%)</text>
<text x="986.0" y="449" font-family="Liberation Serif" font-size="13.3" fill="#000" font-weight="normal" font-style="normal" text-anchor="middle" >BHTN</text>
<text x="986.0" y="466" font-family="Liberation Serif" font-size="13.3" fill="#000" font-weight="normal" font-style="normal" text-anchor="middle" >(1%)</text>
<text x="1110.5" y="449" font-family="Liberation Serif" font-size="13.3" fill="#000" font-weight="normal" font-style="normal" text-anchor="middle" >BHXH</text>
<text x="1110.5" y="466" font-family="Liberation Serif" font-size="13.3" fill="#000" font-weight="normal" font-style="normal" text-anchor="middle" >(8%)</text>
<text x="1170.5" y="449" font-family="Liberation Serif" font-size="13.3" fill="#000" font-weight="normal" font-style="normal" text-anchor="middle" >BHYT</text>
<text x="1170.5" y="466" font-family="Liberation Serif" font-size="13.3" fill="#000" font-weight="normal" font-style="normal" text-anchor="middle" >(1,5%)</text>
<text x="1230.5" y="449" font-family="Liberation Serif" font-size="13.3" fill="#000" font-weight="normal" font-style="normal" text-anchor="middle" >BHTN</text>
<text x="1230.5" y="466" font-family="Liberation Serif" font-size="13.3" fill="#000" font-weight="normal" font-style="normal" text-anchor="middle" >(1%)</text>
<text x="1047.0" y="449" font-family="Liberation Serif" font-size="12.5" fill="#000" font-weight="bold" font-style="normal" text-anchor="middle" stroke="#000" stroke-width="0.2" >Cộng</text>
<text x="1047.0" y="466" font-family="Liberation Serif" font-size="13.5" fill="#000" font-weight="bold" font-style="normal" text-anchor="middle" textLength="38" lengthAdjust="spacingAndGlyphs" stroke="#000" stroke-width="0.2" >23,5%</text>
<text x="1200.5" y="391" font-family="Liberation Serif" font-size="12.5" fill="#000" font-weight="bold" font-style="normal" text-anchor="middle" stroke="#000" stroke-width="0.2" >Trích vào Lương nhân viên</text>
<text x="1290.5" y="449" font-family="Liberation Serif" font-size="12.5" fill="#000" font-weight="bold" font-style="normal" text-anchor="middle" stroke="#000" stroke-width="0.2" >Cộng</text>
<text x="1290.5" y="466" font-family="Liberation Serif" font-size="13.5" fill="#000" font-weight="bold" font-style="normal" text-anchor="middle" textLength="38" lengthAdjust="spacingAndGlyphs" stroke="#000" stroke-width="0.2" >10,5%</text>
<text x="1348.5" y="415" font-family="Liberation Serif" font-size="12.5" fill="#000" font-weight="bold" font-style="normal" text-anchor="middle" stroke="#000" stroke-width="0.2" >Thuế</text>
<text x="1348.5" y="432" font-family="Liberation Serif" font-size="12.5" fill="#000" font-weight="bold" font-style="normal" text-anchor="middle" stroke="#000" stroke-width="0.2" >TNCN</text>
<text x="1404.0" y="415" font-family="Liberation Serif" font-size="12.5" fill="#000" font-weight="bold" font-style="normal" text-anchor="middle" stroke="#000" stroke-width="0.2" >Tạm</text>
<text x="1404.0" y="432" font-family="Liberation Serif" font-size="12.5" fill="#000" font-weight="bold" font-style="normal" text-anchor="middle" stroke="#000" stroke-width="0.2" >ứng</text>
<text x="1474.0" y="415" font-family="Liberation Serif" font-size="12.5" fill="#000" font-weight="bold" font-style="normal" text-anchor="middle" stroke="#000" stroke-width="0.2" >Thực</text>
<text x="1474.0" y="432" font-family="Liberation Serif" font-size="12.5" fill="#000" font-weight="bold" font-style="normal" text-anchor="middle" stroke="#000" stroke-width="0.2" >lĩnh</text>
<text x="1549.0" y="424" font-family="Liberation Serif" font-size="12.5" fill="#000" font-weight="bold" font-style="normal" text-anchor="middle" stroke="#000" stroke-width="0.2" >Ghi chú</text>
<text x="187.5" y="523" font-family="Liberation Serif" font-size="13.3" fill="#000" font-weight="normal" font-style="normal" text-anchor="middle" textLength="6.0" lengthAdjust="spacingAndGlyphs" >1</text>
<text x="244.0" y="523" font-family="Liberation Serif" font-size="13.3" fill="#000" font-weight="normal" font-style="normal" text-anchor="middle" textLength="6.0" lengthAdjust="spacingAndGlyphs" >2</text>
<text x="310.5" y="523" font-family="Liberation Serif" font-size="13.3" fill="#000" font-weight="normal" font-style="normal" text-anchor="middle" textLength="6.0" lengthAdjust="spacingAndGlyphs" >3</text>
<text x="375.0" y="523" font-family="Liberation Serif" font-size="13.3" fill="#000" font-weight="normal" font-style="normal" text-anchor="middle" textLength="6.0" lengthAdjust="spacingAndGlyphs" >4</text>
<text x="443.0" y="523" font-family="Liberation Serif" font-size="13.3" fill="#000" font-weight="normal" font-style="normal" text-anchor="middle" textLength="6.0" lengthAdjust="spacingAndGlyphs" >5</text>
<text x="512.0" y="523" font-family="Liberation Serif" font-size="13.3" fill="#000" font-weight="normal" font-style="normal" text-anchor="middle" textLength="6.0" lengthAdjust="spacingAndGlyphs" >6</text>
<text x="579.0" y="523" font-family="Liberation Serif" font-size="13.3" fill="#000" font-weight="normal" font-style="normal" text-anchor="middle" textLength="6.0" lengthAdjust="spacingAndGlyphs" >8</text>
<text x="635.5" y="523" font-family="Liberation Serif" font-size="13.3" fill="#000" font-weight="normal" font-style="normal" text-anchor="middle" textLength="6.0" lengthAdjust="spacingAndGlyphs" >9</text>
<text x="693.0" y="523" font-family="Liberation Serif" font-size="13.3" fill="#000" font-weight="normal" font-style="normal" text-anchor="middle" textLength="12.0" lengthAdjust="spacingAndGlyphs" >10</text>
<text x="760.5" y="523" font-family="Liberation Serif" font-size="13.3" fill="#000" font-weight="normal" font-style="normal" text-anchor="middle" textLength="12.0" lengthAdjust="spacingAndGlyphs" >11</text>
<text x="821.0" y="523" font-family="Liberation Serif" font-size="13.3" fill="#000" font-weight="normal" font-style="normal" text-anchor="middle" textLength="12.0" lengthAdjust="spacingAndGlyphs" >12</text>
<text x="876.0" y="523" font-family="Liberation Serif" font-size="13.3" fill="#000" font-weight="normal" font-style="normal" text-anchor="middle" textLength="12.0" lengthAdjust="spacingAndGlyphs" >13</text>
<text x="931.0" y="523" font-family="Liberation Serif" font-size="13.3" fill="#000" font-weight="normal" font-style="normal" text-anchor="middle" textLength="12.0" lengthAdjust="spacingAndGlyphs" >14</text>
<text x="986.0" y="523" font-family="Liberation Serif" font-size="13.3" fill="#000" font-weight="normal" font-style="normal" text-anchor="middle" textLength="12.0" lengthAdjust="spacingAndGlyphs" >15</text>
<text x="1047.0" y="523" font-family="Liberation Serif" font-size="13.3" fill="#000" font-weight="normal" font-style="normal" text-anchor="middle" textLength="12.0" lengthAdjust="spacingAndGlyphs" >16</text>
<text x="1110.5" y="523" font-family="Liberation Serif" font-size="13.3" fill="#000" font-weight="normal" font-style="normal" text-anchor="middle" textLength="12.0" lengthAdjust="spacingAndGlyphs" >17</text>
<text x="1170.5" y="523" font-family="Liberation Serif" font-size="13.3" fill="#000" font-weight="normal" font-style="normal" text-anchor="middle" textLength="12.0" lengthAdjust="spacingAndGlyphs" >18</text>
<text x="1230.5" y="523" font-family="Liberation Serif" font-size="13.3" fill="#000" font-weight="normal" font-style="normal" text-anchor="middle" textLength="12.0" lengthAdjust="spacingAndGlyphs" >19</text>
<text x="1290.5" y="523" font-family="Liberation Serif" font-size="13.3" fill="#000" font-weight="normal" font-style="normal" text-anchor="middle" textLength="12.0" lengthAdjust="spacingAndGlyphs" >20</text>
<text x="1348.5" y="523" font-family="Liberation Serif" font-size="13.3" fill="#000" font-weight="normal" font-style="normal" text-anchor="middle" textLength="12.0" lengthAdjust="spacingAndGlyphs" >21</text>
<text x="1404.0" y="523" font-family="Liberation Serif" font-size="13.3" fill="#000" font-weight="normal" font-style="normal" text-anchor="middle" textLength="12.0" lengthAdjust="spacingAndGlyphs" >22</text>
<text x="1474.0" y="523" font-family="Liberation Serif" font-size="13.3" fill="#000" font-weight="normal" font-style="normal" text-anchor="middle" textLength="12.0" lengthAdjust="spacingAndGlyphs" >23</text>
<text x="47.0" y="568" font-family="Liberation Serif" font-size="13.2" fill="#000" font-weight="bold" font-style="normal" text-anchor="middle" textLength="9.03" lengthAdjust="spacingAndGlyphs" stroke="#000" stroke-width="0.2" >A</text>
<text x="71" y="568" font-family="Liberation Serif" font-size="13.2" fill="#000" font-weight="bold" font-style="normal" text-anchor="start" textLength="90.67" lengthAdjust="spacingAndGlyphs" stroke="#000" stroke-width="0.2" >Bộ phận Quản lý</text>
<text x="276" y="568" font-family="Liberation Serif" font-size="13.5" fill="#000" font-weight="bold" font-style="normal" text-anchor="end" textLength="54.0" lengthAdjust="spacingAndGlyphs" stroke="#000" stroke-width="0.2" >37,000,000</text>
<text x="340" y="568" font-family="Liberation Serif" font-size="13.5" fill="#000" font-weight="bold" font-style="normal" text-anchor="end" textLength="48.0" lengthAdjust="spacingAndGlyphs" stroke="#000" stroke-width="0.2" >6,000,000</text>
<text x="405" y="568" font-family="Liberation Serif" font-size="13.5" fill="#000" font-weight="bold" font-style="normal" text-anchor="end" textLength="48.0" lengthAdjust="spacingAndGlyphs" stroke="#000" stroke-width="0.2" >4,380,000</text>
<text x="476" y="568" font-family="Liberation Serif" font-size="13.5" fill="#000" font-weight="bold" font-style="normal" text-anchor="end" textLength="48.0" lengthAdjust="spacingAndGlyphs" stroke="#000" stroke-width="0.2" >6,800,000</text>
<text x="543" y="568" font-family="Liberation Serif" font-size="13.5" fill="#000" font-weight="bold" font-style="normal" text-anchor="end" textLength="48.0" lengthAdjust="spacingAndGlyphs" stroke="#000" stroke-width="0.2" >6,800,000</text>
<text x="610" y="568" font-family="Liberation Serif" font-size="13.5" fill="#000" font-weight="bold" font-style="normal" text-anchor="end" textLength="54.0" lengthAdjust="spacingAndGlyphs" stroke="#000" stroke-width="0.2" >60,980,000</text>
<text x="656" y="568" font-family="Liberation Serif" font-size="13.5" fill="#000" font-weight="bold" font-style="normal" text-anchor="end" textLength="18.0" lengthAdjust="spacingAndGlyphs" stroke="#000" stroke-width="0.2" >152</text>
<text x="725" y="568" font-family="Liberation Serif" font-size="13.5" fill="#000" font-weight="bold" font-style="normal" text-anchor="end" textLength="54.0" lengthAdjust="spacingAndGlyphs" stroke="#000" stroke-width="0.2" >59,767,692</text>
<text x="791" y="568" font-family="Liberation Serif" font-size="13.5" fill="#000" font-weight="bold" font-style="normal" text-anchor="end" textLength="54.0" lengthAdjust="spacingAndGlyphs" stroke="#000" stroke-width="0.2" >43,000,000</text>
<text x="846" y="568" font-family="Liberation Serif" font-size="13.5" fill="#000" font-weight="bold" font-style="normal" text-anchor="end" textLength="39.0" lengthAdjust="spacingAndGlyphs" stroke="#000" stroke-width="0.2" >860,000</text>
<text x="901" y="568" font-family="Liberation Serif" font-size="13.5" fill="#000" font-weight="bold" font-style="normal" text-anchor="end" textLength="48.0" lengthAdjust="spacingAndGlyphs" stroke="#000" stroke-width="0.2" >7,525,000</text>
<text x="956" y="568" font-family="Liberation Serif" font-size="13.5" fill="#000" font-weight="bold" font-style="normal" text-anchor="end" textLength="48.0" lengthAdjust="spacingAndGlyphs" stroke="#000" stroke-width="0.2" >1,290,000</text>
<text x="1011" y="568" font-family="Liberation Serif" font-size="13.5" fill="#000" font-weight="bold" font-style="normal" text-anchor="end" textLength="39.0" lengthAdjust="spacingAndGlyphs" stroke="#000" stroke-width="0.2" >430,000</text>
<text x="1078" y="568" font-family="Liberation Serif" font-size="13.5" fill="#000" font-weight="bold" font-style="normal" text-anchor="end" textLength="54.0" lengthAdjust="spacingAndGlyphs" stroke="#000" stroke-width="0.2" >10,105,000</text>
<text x="1138" y="568" font-family="Liberation Serif" font-size="13.5" fill="#000" font-weight="bold" font-style="normal" text-anchor="end" textLength="48.0" lengthAdjust="spacingAndGlyphs" stroke="#000" stroke-width="0.2" >3,440,000</text>
<text x="1198" y="568" font-family="Liberation Serif" font-size="13.5" fill="#000" font-weight="bold" font-style="normal" text-anchor="end" textLength="39.0" lengthAdjust="spacingAndGlyphs" stroke="#000" stroke-width="0.2" >645,000</text>
<text x="1258" y="568" font-family="Liberation Serif" font-size="13.5" fill="#000" font-weight="bold" font-style="normal" text-anchor="end" textLength="39.0" lengthAdjust="spacingAndGlyphs" stroke="#000" stroke-width="0.2" >430,000</text>
<text x="1318" y="568" font-family="Liberation Serif" font-size="13.5" fill="#000" font-weight="bold" font-style="normal" text-anchor="end" textLength="48.0" lengthAdjust="spacingAndGlyphs" stroke="#000" stroke-width="0.2" >4,515,000</text>
<text x="1374" y="568" font-family="Liberation Serif" font-size="13.5" fill="#000" font-weight="bold" font-style="normal" text-anchor="end" textLength="6.0" lengthAdjust="spacingAndGlyphs" stroke="#000" stroke-width="0.2" >0</text>
<text x="1429" y="568" font-family="Liberation Serif" font-size="13.5" fill="#000" font-weight="bold" font-style="normal" text-anchor="end" textLength="6.0" lengthAdjust="spacingAndGlyphs" stroke="#000" stroke-width="0.2" >0</text>
<text x="1514" y="568" font-family="Liberation Serif" font-size="13.5" fill="#000" font-weight="bold" font-style="normal" text-anchor="end" textLength="54.0" lengthAdjust="spacingAndGlyphs" stroke="#000" stroke-width="0.2" >55,252,692</text>
<text x="47.0" y="595" font-family="Liberation Serif" font-size="13.5" fill="#000" font-weight="normal" font-style="normal" text-anchor="middle" textLength="12.0" lengthAdjust="spacingAndGlyphs" >01</text>
<text x="71" y="595" font-family="Liberation Serif" font-size="13.5" fill="#000" font-weight="normal" font-style="normal" text-anchor="start" textLength="76.65" lengthAdjust="spacingAndGlyphs" >Đoàn Công Lập</text>
<text x="187.5" y="595" font-family="Liberation Serif" font-size="13.5" fill="#000" font-weight="normal" font-style="normal" text-anchor="middle" textLength="17.33" lengthAdjust="spacingAndGlyphs" >GĐ</text>
<text x="276" y="595" font-family="Liberation Serif" font-size="13.5" fill="#000" font-weight="normal" font-style="normal" text-anchor="end" textLength="48.0" lengthAdjust="spacingAndGlyphs" >8,000,000</text>
<text x="340" y="595" font-family="Liberation Serif" font-size="13.5" fill="#000" font-weight="normal" font-style="normal" text-anchor="end" textLength="48.0" lengthAdjust="spacingAndGlyphs" >3,000,000</text>
<text x="405" y="595" font-family="Liberation Serif" font-size="13.5" fill="#000" font-weight="normal" font-style="normal" text-anchor="end" textLength="39.0" lengthAdjust="spacingAndGlyphs" >730,000</text>
<text x="476" y="595" font-family="Liberation Serif" font-size="13.5" fill="#000" font-weight="normal" font-style="normal" text-anchor="end" textLength="48.0" lengthAdjust="spacingAndGlyphs" >2,000,000</text>
<text x="543" y="595" font-family="Liberation Serif" font-size="13.5" fill="#000" font-weight="normal" font-style="normal" text-anchor="end" textLength="48.0" lengthAdjust="spacingAndGlyphs" >2,000,000</text>
<text x="610" y="595" font-family="Liberation Serif" font-size="13.5" fill="#000" font-weight="normal" font-style="normal" text-anchor="end" textLength="54.0" lengthAdjust="spacingAndGlyphs" >15,730,000</text>
<text x="656" y="595" font-family="Liberation Serif" font-size="13.5" fill="#000" font-weight="normal" font-style="normal" text-anchor="end" textLength="12.0" lengthAdjust="spacingAndGlyphs" >26</text>
<text x="725" y="595" font-family="Liberation Serif" font-size="13.5" fill="#000" font-weight="bold" font-style="normal" text-anchor="end" textLength="54.0" lengthAdjust="spacingAndGlyphs" stroke="#000" stroke-width="0.2" >15,730,000</text>
<text x="791" y="595" font-family="Liberation Serif" font-size="13.5" fill="#000" font-weight="bold" font-style="normal" text-anchor="end" textLength="54.0" lengthAdjust="spacingAndGlyphs" stroke="#000" stroke-width="0.2" >11,000,000</text>
<text x="846" y="595" font-family="Liberation Serif" font-size="13.5" fill="#000" font-weight="normal" font-style="normal" text-anchor="end" textLength="39.0" lengthAdjust="spacingAndGlyphs" >220,000</text>
<text x="901" y="595" font-family="Liberation Serif" font-size="13.5" fill="#000" font-weight="normal" font-style="normal" text-anchor="end" textLength="48.0" lengthAdjust="spacingAndGlyphs" >1,925,000</text>
<text x="956" y="595" font-family="Liberation Serif" font-size="13.5" fill="#000" font-weight="normal" font-style="normal" text-anchor="end" textLength="39.0" lengthAdjust="spacingAndGlyphs" >330,000</text>
<text x="1011" y="595" font-family="Liberation Serif" font-size="13.5" fill="#000" font-weight="normal" font-style="normal" text-anchor="end" textLength="39.0" lengthAdjust="spacingAndGlyphs" >110,000</text>
<text x="1078" y="595" font-family="Liberation Serif" font-size="13.5" fill="#000" font-weight="normal" font-style="normal" text-anchor="end" textLength="48.0" lengthAdjust="spacingAndGlyphs" >2,585,000</text>
<text x="1138" y="595" font-family="Liberation Serif" font-size="13.5" fill="#000" font-weight="normal" font-style="normal" text-anchor="end" textLength="39.0" lengthAdjust="spacingAndGlyphs" >880,000</text>
<text x="1198" y="595" font-family="Liberation Serif" font-size="13.5" fill="#000" font-weight="normal" font-style="normal" text-anchor="end" textLength="39.0" lengthAdjust="spacingAndGlyphs" >165,000</text>
<text x="1258" y="595" font-family="Liberation Serif" font-size="13.5" fill="#000" font-weight="normal" font-style="normal" text-anchor="end" textLength="39.0" lengthAdjust="spacingAndGlyphs" >110,000</text>
<text x="1318" y="595" font-family="Liberation Serif" font-size="13.5" fill="#000" font-weight="normal" font-style="normal" text-anchor="end" textLength="48.0" lengthAdjust="spacingAndGlyphs" >1,155,000</text>
<text x="1514" y="595" font-family="Liberation Serif" font-size="13.5" fill="#000" font-weight="bold" font-style="normal" text-anchor="end" textLength="54.0" lengthAdjust="spacingAndGlyphs" stroke="#000" stroke-width="0.2" >14,575,000</text>
<text x="47.0" y="621" font-family="Liberation Serif" font-size="13.5" fill="#000" font-weight="normal" font-style="normal" text-anchor="middle" textLength="12.0" lengthAdjust="spacingAndGlyphs" >02</text>
<text x="71" y="621" font-family="Liberation Serif" font-size="13.5" fill="#000" font-weight="normal" font-style="normal" text-anchor="start" textLength="79.99" lengthAdjust="spacingAndGlyphs" >Nguyễn Linh Tú</text>
<text x="187.5" y="621" font-family="Liberation Serif" font-size="13.5" fill="#000" font-weight="normal" font-style="normal" text-anchor="middle" textLength="27.01" lengthAdjust="spacingAndGlyphs" >P.GĐ</text>
<text x="276" y="621" font-family="Liberation Serif" font-size="13.5" fill="#000" font-weight="normal" font-style="normal" text-anchor="end" textLength="48.0" lengthAdjust="spacingAndGlyphs" >7,000,000</text>
<text x="340" y="621" font-family="Liberation Serif" font-size="13.5" fill="#000" font-weight="normal" font-style="normal" text-anchor="end" textLength="48.0" lengthAdjust="spacingAndGlyphs" >3,000,000</text>
<text x="405" y="621" font-family="Liberation Serif" font-size="13.5" fill="#000" font-weight="normal" font-style="normal" text-anchor="end" textLength="39.0" lengthAdjust="spacingAndGlyphs" >730,000</text>
<text x="476" y="621" font-family="Liberation Serif" font-size="13.5" fill="#000" font-weight="normal" font-style="normal" text-anchor="end" textLength="48.0" lengthAdjust="spacingAndGlyphs" >2,000,000</text>
<text x="543" y="621" font-family="Liberation Serif" font-size="13.5" fill="#000" font-weight="normal" font-style="normal" text-anchor="end" textLength="48.0" lengthAdjust="spacingAndGlyphs" >2,000,000</text>
<text x="610" y="621" font-family="Liberation Serif" font-size="13.5" fill="#000" font-weight="normal" font-style="normal" text-anchor="end" textLength="54.0" lengthAdjust="spacingAndGlyphs" >13,730,000</text>
<text x="656" y="621" font-family="Liberation Serif" font-size="13.5" fill="#000" font-weight="normal" font-style="normal" text-anchor="end" textLength="12.0" lengthAdjust="spacingAndGlyphs" >26</text>
<text x="725" y="621" font-family="Liberation Serif" font-size="13.5" fill="#000" font-weight="bold" font-style="normal" text-anchor="end" textLength="54.0" lengthAdjust="spacingAndGlyphs" stroke="#000" stroke-width="0.2" >13,730,000</text>
<text x="791" y="621" font-family="Liberation Serif" font-size="13.5" fill="#000" font-weight="bold" font-style="normal" text-anchor="end" textLength="48.0" lengthAdjust="spacingAndGlyphs" stroke="#000" stroke-width="0.2" >9,000,000</text>
<text x="846" y="621" font-family="Liberation Serif" font-size="13.5" fill="#000" font-weight="normal" font-style="normal" text-anchor="end" textLength="39.0" lengthAdjust="spacingAndGlyphs" >180,000</text>
<text x="901" y="621" font-family="Liberation Serif" font-size="13.5" fill="#000" font-weight="normal" font-style="normal" text-anchor="end" textLength="48.0" lengthAdjust="spacingAndGlyphs" >1,575,000</text>
<text x="956" y="621" font-family="Liberation Serif" font-size="13.5" fill="#000" font-weight="normal" font-style="normal" text-anchor="end" textLength="39.0" lengthAdjust="spacingAndGlyphs" >270,000</text>
<text x="1011" y="621" font-family="Liberation Serif" font-size="13.5" fill="#000" font-weight="normal" font-style="normal" text-anchor="end" textLength="33.0" lengthAdjust="spacingAndGlyphs" >90,000</text>
<text x="1078" y="621" font-family="Liberation Serif" font-size="13.5" fill="#000" font-weight="normal" font-style="normal" text-anchor="end" textLength="48.0" lengthAdjust="spacingAndGlyphs" >2,115,000</text>
<text x="1138" y="621" font-family="Liberation Serif" font-size="13.5" fill="#000" font-weight="normal" font-style="normal" text-anchor="end" textLength="39.0" lengthAdjust="spacingAndGlyphs" >720,000</text>
<text x="1198" y="621" font-family="Liberation Serif" font-size="13.5" fill="#000" font-weight="normal" font-style="normal" text-anchor="end" textLength="39.0" lengthAdjust="spacingAndGlyphs" >135,000</text>
<text x="1258" y="621" font-family="Liberation Serif" font-size="13.5" fill="#000" font-weight="normal" font-style="normal" text-anchor="end" textLength="33.0" lengthAdjust="spacingAndGlyphs" >90,000</text>
<text x="1318" y="621" font-family="Liberation Serif" font-size="13.5" fill="#000" font-weight="normal" font-style="normal" text-anchor="end" textLength="39.0" lengthAdjust="spacingAndGlyphs" >945,000</text>
<text x="1514" y="621" font-family="Liberation Serif" font-size="13.5" fill="#000" font-weight="bold" font-style="normal" text-anchor="end" textLength="54.0" lengthAdjust="spacingAndGlyphs" stroke="#000" stroke-width="0.2" >12,785,000</text>
<rect x="1547" y="124" width="180" height="389" fill="#000" opacity="0.04"/>
<rect x="1548" y="125" width="178" height="387" fill="#000" opacity="0.04"/>
<rect x="1549" y="126" width="176" height="385" fill="#000" opacity="0.04"/>
<rect x="1546.5" y="122.5" width="177" height="387" fill="#fff" stroke="#c6c6c6"/>
<rect x="1548" y="123" width="174" height="24" fill="#eeeeee" />
<text x="1555" y="140.0" font-family="Liberation Sans" font-size="12" fill="#666666" font-weight="bold" font-style="normal" text-anchor="start" textLength="45.6" lengthAdjust="spacingAndGlyphs" >Cell Size</text>
<rect x="1548" y="269" width="174" height="23" fill="#eeeeee" />
<text x="1555" y="285.0" font-family="Liberation Sans" font-size="12" fill="#666666" font-weight="bold" font-style="normal" text-anchor="start" textLength="46.3" lengthAdjust="spacingAndGlyphs" >Visibility</text>
<rect x="1548" y="316" width="174" height="23" fill="#eeeeee" />
<text x="1555" y="332.0" font-family="Liberation Sans" font-size="12" fill="#666666" font-weight="bold" font-style="normal" text-anchor="start" textLength="90.6" lengthAdjust="spacingAndGlyphs" >Organize Sheets</text>
<rect x="1548" y="411" width="174" height="23" fill="#eeeeee" />
<text x="1555" y="427.0" font-family="Liberation Sans" font-size="12" fill="#666666" font-weight="bold" font-style="normal" text-anchor="start" textLength="58.1" lengthAdjust="spacingAndGlyphs" >Protection</text>
<rect x="1548" y="147" width="174" height="24" fill="#d3f0e0" />
<text x="1579.2" y="163.1" font-family="Liberation Sans" font-size="12" fill="#444444" font-weight="normal" font-style="normal" text-anchor="start" textLength="70.7" lengthAdjust="spacingAndGlyphs" >Row Height...</text>
<rect x="1604.9" y="164" width="7.9" height="1" fill="#555" />
<text x="1579.2" y="186.8" font-family="Liberation Sans" font-size="12" fill="#444444" font-weight="normal" font-style="normal" text-anchor="start" textLength="103.7" lengthAdjust="spacingAndGlyphs" >AutoFit Row Height</text>
<rect x="1580.1" y="188" width="7.4" height="1" fill="#555" />
<text x="1579.2" y="212.9" font-family="Liberation Sans" font-size="12" fill="#444444" font-weight="normal" font-style="normal" text-anchor="start" textLength="86.4" lengthAdjust="spacingAndGlyphs" >Column Width...</text>
<rect x="1623.2" y="214" width="10.9" height="1" fill="#555" />
<text x="1579.2" y="237.4" font-family="Liberation Sans" font-size="12" fill="#444444" font-weight="normal" font-style="normal" text-anchor="start" textLength="119.6" lengthAdjust="spacingAndGlyphs" >AutoFit Column Width</text>
<rect x="1614.1" y="239" width="2.1" height="1" fill="#555" />
<text x="1579.2" y="260.79999999999995" font-family="Liberation Sans" font-size="12" fill="#444444" font-weight="normal" font-style="normal" text-anchor="start" textLength="81.5" lengthAdjust="spacingAndGlyphs" >Default Width...</text>
<rect x="1580.1" y="262" width="8.0" height="1" fill="#555" />
<text x="1579.2" y="308.09999999999997" font-family="Liberation Sans" font-size="12" fill="#444444" font-weight="normal" font-style="normal" text-anchor="start" textLength="78.9" lengthAdjust="spacingAndGlyphs" >Hide &amp; Unhide</text>
<rect x="1618.0" y="309" width="8.2" height="1" fill="#555" />
<text x="1579.2" y="354.79999999999995" font-family="Liberation Sans" font-size="12" fill="#444444" font-weight="normal" font-style="normal" text-anchor="start" textLength="74.5" lengthAdjust="spacingAndGlyphs" >Rename Sheet</text>
<rect x="1580.1" y="356" width="7.5" height="1" fill="#555" />
<text x="1579.2" y="378.79999999999995" font-family="Liberation Sans" font-size="12" fill="#444444" font-weight="normal" font-style="normal" text-anchor="start" textLength="115.5" lengthAdjust="spacingAndGlyphs" >Move or Copy Sheet...</text>
<rect x="1580.1" y="380" width="9.1" height="1" fill="#555" />
<text x="1579.2" y="402.7" font-family="Liberation Sans" font-size="12" fill="#444444" font-weight="normal" font-style="normal" text-anchor="start" textLength="52" lengthAdjust="spacingAndGlyphs" >Tab Color</text>
<rect x="1580.1" y="404" width="6.8" height="1" fill="#555" />
<text x="1579.2" y="450.5" font-family="Liberation Sans" font-size="12" fill="#444444" font-weight="normal" font-style="normal" text-anchor="start" textLength="78.6" lengthAdjust="spacingAndGlyphs" >Protect Sheet...</text>
<rect x="1580.1" y="452" width="7.0" height="1" fill="#555" />
<text x="1579.2" y="473.79999999999995" font-family="Liberation Sans" font-size="12" fill="#444444" font-weight="normal" font-style="normal" text-anchor="start" textLength="47.9" lengthAdjust="spacingAndGlyphs" >Lock Cell</text>
<rect x="1580.1" y="475" width="5.9" height="1" fill="#555" />
<text x="1579.2" y="500.09999999999997" font-family="Liberation Sans" font-size="12" fill="#444444" font-weight="normal" font-style="normal" text-anchor="start" textLength="74.5" lengthAdjust="spacingAndGlyphs" >Format Cells...</text>
<rect x="1629.1" y="501" width="5.8" height="1" fill="#555" />
<rect x="1579" y="195" width="143" height="1" fill="#e1e1e1" />
<rect x="1579" y="482" width="143" height="1" fill="#e1e1e1" />
<polygon points="1709.5,300.0 1713,303.5 1709.5,307.0" fill="#666" shape-rendering="geometricPrecision"/>
<polygon points="1709.5,395.0 1713,398.5 1709.5,402.0" fill="#666" shape-rendering="geometricPrecision"/>
<g shape-rendering="geometricPrecision"><path d="M1554.5 152 V166.5 M1552 154.5 L1554.5 152 L1557 154.5 M1552 164 L1554.5 166.5 L1557 164" stroke="#3e7bc4" stroke-width="1.1" fill="none"/><rect x="1559.5" y="152.5" width="7.5" height="13.5" fill="#fff" stroke="#666" stroke-width="1"/><path d="M1553.5 210 V202.5 H1566.5 V210" stroke="#666" stroke-width="1" fill="none"/><path d="M1552 213.5 H1567.5 M1554.5 211 L1552 213.5 L1554.5 216 M1565 211 L1567.5 213.5 L1565 216" stroke="#3e7bc4" stroke-width="1.1" fill="none"/><path d="M1552.5 438.5 H1566.5 V443 M1552.5 438.5 V452.5 H1560 M1552.5 442.5 H1566.5 M1552.5 446.5 H1560 M1552.5 450.5 H1560 M1556.5 438.5 V452.5 M1560.5 438.5 V443 M1563.5 438.5 V443" stroke="#777" stroke-width="0.9" fill="none"/><path d="M1562.5 447 V445.5 A2 2 0 0 1 1566.5 445.5 V447" stroke="#e8be76" stroke-width="1.2" fill="none"/><rect x="1561" y="447" width="7" height="6.5" fill="#e8be76"/><rect x="1550.5" y="460.5" width="19" height="19" fill="#e9f5ed" stroke="#8fcfa5" stroke-width="1"/><path d="M1556 469 V466.5 A3.6 3.6 0 0 1 1563.2 466.5 V469" stroke="#e8be76" stroke-width="1.6" fill="none"/><rect x="1554" y="469" width="11.2" height="7.4" fill="#e8be76"/><circle cx="1559.6" cy="472" r="1.1" fill="#fff"/><rect x="1559.1" y="472" width="1" height="2.6" fill="#fff"/><rect x="1553.5" y="488.5" width="13" height="15" fill="#fff" stroke="#666" stroke-width="1"/><rect x="1553" y="488" width="14" height="2.5" fill="#3e7bc4"/><circle cx="1557" cy="494.5" r="1.1" fill="#666"/><circle cx="1557" cy="499.2" r="1.1" fill="none" stroke="#666" stroke-width="0.8"/><path d="M1559.5 494.5 H1564 M1559.5 499.2 H1564" stroke="#666" stroke-width="1"/></g>
</svg>
</body></html>
